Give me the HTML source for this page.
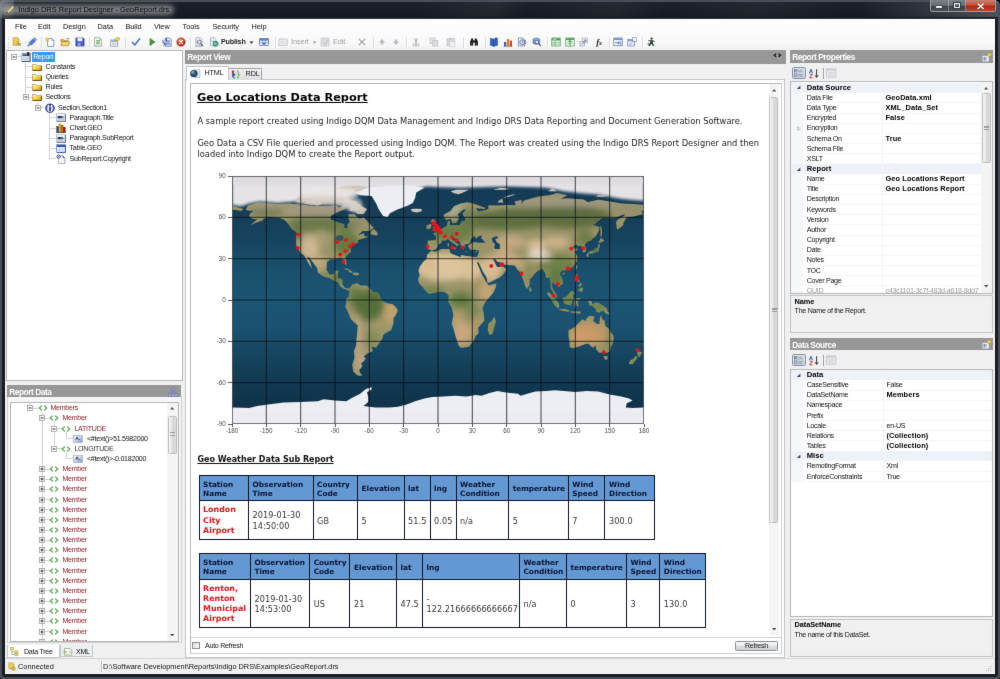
<!DOCTYPE html><html lang="en"><head><meta charset="utf-8"><title>Indigo DRS Report Designer - GeoReport.drs</title><style>
*{box-sizing:border-box;margin:0;padding:0}
html,body{width:1000px;height:679px;overflow:hidden;background:#050607}
body{position:relative;font-family:"Liberation Sans",sans-serif;font-size:7.1px;color:#000;-webkit-font-smoothing:antialiased}
.a{position:absolute}
.t{font-family:"Liberation Sans",sans-serif;font-size:7.1px;letter-spacing:-0.27px;line-height:10px;white-space:nowrap;color:#111}
.b{font-weight:700}
.m{font-family:"Liberation Sans",sans-serif;font-size:7.3px;line-height:10px;white-space:nowrap;color:#111}
.hd{background:#979797;color:#fff;font-weight:700;font-size:8.3px;line-height:15.4px;white-space:nowrap;padding-left:2px;letter-spacing:-0.43px;overflow:hidden}
.pane{background:#fff;border:1px solid #b4b6ba}
.row{position:absolute;left:0;height:10px;white-space:nowrap}
.red{color:#8e1e2a}
.v{font-family:"DejaVu Sans",sans-serif}
.sb{background:#f4f4f4}
.thumb{border:1px solid #bdbdbd;border-radius:1.5px;background:linear-gradient(90deg,#f4f4f4 0%,#e6e6e6 45%,#d2d2d2 55%,#dedede 100%)}
table.r{border-collapse:collapse;table-layout:fixed;position:absolute}
table.r td,table.r th{border:1px solid #0d1526;padding:1.4px 0 0 3.6px;text-align:left;vertical-align:middle;font-family:"DejaVu Sans",sans-serif;overflow:hidden}
table.r th{background:#6498d2;color:#071334;font-weight:700;font-size:7.35px;line-height:9px}
table.r td{background:#fff;color:#333;font-size:8.15px;line-height:10.2px;letter-spacing:.06px}
table.r td.n{color:#e0141c;font-weight:700;font-size:7.9px;letter-spacing:0}
.cat{background:#eef2f9}
</style></head><body><svg width="0" height="0" style="position:absolute"><filter id="soft" x="0" y="0" width="100%" height="100%" color-interpolation-filters="sRGB"><feConvolveMatrix order="3" kernelMatrix="0.0052 0.0619 0.0052 0.0619 0.7316 0.0619 0.0052 0.0619 0.0052" divisor="1" edgeMode="duplicate" preserveAlpha="true"/></filter></svg><div id="app" class="a" style="left:0;top:0;width:1000px;height:679px;overflow:hidden;filter:url(#soft);will-change:transform"><div class="a" style="left:0px;top:0px;width:1000px;height:679px;background:#4a4e58;border-radius:5px 5px 2px 2px"></div>
<div class="a" style="left:2px;top:2px;width:996px;height:675px;background:#181c23;border-radius:3px"></div>
<div class="a" style="left:2px;top:2px;width:996px;height:16.6px;background:linear-gradient(180deg,#1c212a 0,#181d25 50%,#141820 100%);border-radius:3px 3px 0 0"></div>
<div class="a" style="left:2px;top:17.6px;width:996px;height:1.3px;background:#30353d"></div>
<div class="a" style="left:420px;top:2px;width:420px;height:15px;background:linear-gradient(115deg,rgba(255,255,255,0) 0,rgba(255,255,255,.05) 18%,rgba(255,255,255,0) 26%,rgba(255,255,255,.045) 47%,rgba(255,255,255,0) 58%,rgba(255,255,255,.04) 80%,rgba(255,255,255,0) 100%)"></div>
<div class="a" style="left:860px;top:2px;width:138px;height:15px;background:linear-gradient(90deg,rgba(120,125,132,0) 0,rgba(120,125,132,.28) 55%,rgba(130,135,142,.5) 100%)"></div>
<div class="a" style="left:0px;top:0px;width:14px;height:18px;background:radial-gradient(ellipse at 0 0,rgba(150,152,158,.75) 0,rgba(150,152,158,.35) 60%,rgba(150,152,158,0) 100%)"></div>
<div class="a" style="left:1px;top:4.6px;width:173px;height:10.6px;background:rgba(235,236,238,.46);border-radius:5px;filter:blur(2.6px)"></div>
<div class="a" style="left:4.8px;top:4.8px;width:10px;height:10px;"><svg width="10" height="10" viewBox="0 0 10 10" style="display:block;"><path d="M1.2 8.8L2 6.6L7 1.2Q8 .6 8.8 1.6Q9.2 2.4 8.6 3L3.4 8z" fill="#e9d98a" stroke="#8a7a3a" stroke-width=".5"/><path d="M1.2 8.8L2 6.6L3.4 8z" fill="#5a4a2a"/><path d="M7 1.2L8.6 3" stroke="#b9a95a" stroke-width=".6"/></svg></div>
<div class="a m" style="left:18.4px;top:4.90px;font-size:7.5px;color:#0a0a0a">Indigo DRS Report Designer - GeoReport.drs</div>
<div class="a" style="left:929.6px;top:0px;width:66.4px;height:12px;border:1px solid rgba(225,230,236,.5);border-top:none;border-radius:0 0 2.8px 2.8px;overflow:hidden;background:#50555c"><div class="a" style="left:0px;top:0px;width:18.2px;height:12px;background:linear-gradient(180deg,#7d838b 0,#666c74 45%,#3e434a 52%,#4e535a 100%);border-right:1px solid rgba(215,220,226,.4)"><div class="a" style="left:5.6px;top:6.4px;width:6.2px;height:2px;background:#f4f4f4;box-shadow:0 0 .8px .4px #30343a;border-radius:.4px"></div></div><div class="a" style="left:18.2px;top:0px;width:17px;height:12px;background:linear-gradient(180deg,#7d838b 0,#666c74 45%,#3e434a 52%,#4e535a 100%);border-right:1px solid rgba(215,220,226,.4)"><div class="a" style="left:5px;top:3.2px;width:6.6px;height:5.2px;border:1.2px solid #f4f4f4;border-top-width:1.5px;box-shadow:0 0 .8px .4px #30343a;border-radius:.4px"></div></div><div class="a" style="left:35.2px;top:0px;width:31px;height:12px;background:linear-gradient(180deg,#c9816f 0,#bf5640 40%,#ae2a14 52%,#bd3d22 85%,#d0643c 100%)"><svg class="a" style="left:11.2px;top:2.6px" width="7.4" height="6.6" viewBox="0 0 7.4 6.6"><path d="M1.2 1L6.2 5.6M6.2 1L1.2 5.6" stroke="#5a2018" stroke-width="2.3" stroke-linecap="square" opacity=".7"/><path d="M1.2 1L6.2 5.6M6.2 1L1.2 5.6" stroke="#fff" stroke-width="1.45" stroke-linecap="square"/></svg></div></div>
<div class="a" style="left:4.6px;top:18.8px;width:990.6px;height:654.8px;background:#fbfbfb"></div>
<div class="a" style="left:5.4px;top:19.1px;width:989.4px;height:653.9px;background:#f0f0f0"></div>
<div class="a" style="left:5px;top:19.1px;width:990px;height:14.9px;background:linear-gradient(180deg,#fdfdfd 0,#fbfbfb 100%)"></div>
<div class="a m" style="left:15px;top:21.90px;">File</div>
<div class="a m" style="left:38px;top:21.90px;">Edit</div>
<div class="a m" style="left:63px;top:21.90px;">Design</div>
<div class="a m" style="left:97.6px;top:21.90px;">Data</div>
<div class="a m" style="left:125.4px;top:21.90px;">Build</div>
<div class="a m" style="left:154px;top:21.90px;">View</div>
<div class="a m" style="left:182.5px;top:21.90px;">Tools</div>
<div class="a m" style="left:212.5px;top:21.90px;">Security</div>
<div class="a m" style="left:251.5px;top:21.90px;">Help</div>
<div class="a" style="left:5px;top:34px;width:990px;height:16.5px;background:linear-gradient(180deg,#fbfbfb 0,#f8f8f8 55%,#f0f0f1 100%)"></div>
<div class="a" style="left:8px;top:37px;width:1.4px;height:10.5px;background:repeating-linear-gradient(180deg,#c3c6cb 0,#c3c6cb 1px,transparent 1px,transparent 2.4px)"></div><div class="a" style="left:12.0px;top:37.4px;width:10px;height:10px"><svg width="10" height="10" viewBox="0 0 10 10" style="display:block;"><path d="M1.2 .8H5.6L7 2.2V8.2H1.2z" fill="#f5cf4e" stroke="#a07a18" stroke-width=".55"/><path d="M5.2 5.6L8.6 9M7.6 7.2L8.8 6.8" stroke="#6a5a3a" stroke-width=".9"/><circle cx="5.2" cy="5.6" r="1.1" fill="#f2e08a" stroke="#7a6420" stroke-width=".4"/></svg></div><div class="a" style="left:26.8px;top:37.4px;width:10px;height:10px"><svg width="10" height="10" viewBox="0 0 10 10" style="display:block;"><path d="M.8 9.2L3.4 6.6" stroke="#7f92c4" stroke-width="2"/><path d="M2 5.8L5.8 2L8.2 4.4L4.4 8.2z" fill="#4f79cf" stroke="#2f4f9f" stroke-width=".4"/><path d="M5.8 2L7.6 .4L9.8 2.6L8.2 4.4z" fill="#7f9fe4" stroke="#3a5aaa" stroke-width=".4"/></svg></div><div class="a" style="left:41.0px;top:36.5px;width:1px;height:11.5px;background:#d9dbdf"></div><div class="a" style="left:42.0px;top:36.5px;width:1px;height:11.5px;background:#fff"></div><div class="a" style="left:45.0px;top:37.4px;width:10px;height:10px"><svg width="10" height="10" viewBox="0 0 10 10" style="display:block;"><path d="M2.6 1.6H7L8.8 3.4V9.4H2.6z" fill="#fbfcff" stroke="#4a5a8a" stroke-width=".6"/><path d="M7 1.6V3.4H8.8" fill="#dfe6f5" stroke="#4a5a8a" stroke-width=".5"/><path d="M2.2 .2L2.9 1.5L4.3 1.7L3.3 2.7L3.5 4.1L2.2 3.4L.9 4.1L1.1 2.7L.1 1.7L1.5 1.5z" fill="#f6d53a" stroke="#b08a10" stroke-width=".3"/></svg></div><div class="a" style="left:60.0px;top:37.4px;width:10px;height:10px"><svg width="10" height="10" viewBox="0 0 10 10" style="display:block;"><path d="M.8 2.6H3.6L4.4 3.4H8V4.6H.8z" fill="#e9b838" stroke="#8a6410" stroke-width=".5"/><path d="M.8 8.8L2 4.6H9.6L8.2 8.8z" fill="#f7d768" stroke="#8a6410" stroke-width=".55"/><path d="M6 1.6Q7.6 .6 8.8 2.2L8 2.6M8.8 2.2L9.4 1.2" fill="none" stroke="#5a6a3a" stroke-width=".5"/></svg></div><div class="a" style="left:74.6px;top:37.4px;width:10px;height:10px"><svg width="10" height="10" viewBox="0 0 10 10" style="display:block;"><path d="M.9 .9H8.2L9.1 1.8V9.1H.9z" fill="#3f55c8" stroke="#1f2f86" stroke-width=".6"/><rect x="2.4" y=".9" width="5" height="3.4" fill="#e9eefc"/><rect x="2.6" y="5.8" width="4.8" height="3.3" fill="#8f9fe0"/><rect x="5.6" y="6.3" width="1.2" height="2.3" fill="#26338a"/></svg></div><div class="a" style="left:88.5px;top:36.5px;width:1px;height:11.5px;background:#d9dbdf"></div><div class="a" style="left:89.5px;top:36.5px;width:1px;height:11.5px;background:#fff"></div><div class="a" style="left:92.6px;top:37.4px;width:10px;height:10px"><svg width="10" height="10" viewBox="0 0 10 10" style="display:block;"><path d="M1.6 .8H6.6L8.4 2.6V9.2H1.6z" fill="#f9fbf6" stroke="#6a7a7a" stroke-width=".6"/><path d="M3 3.6H7M3 5.2H7M3 6.8H7" stroke="#58a04a" stroke-width=".9"/><path d="M6.6 .8V2.6H8.4" fill="#dfe8df" stroke="#6a7a7a" stroke-width=".45"/></svg></div><div class="a" style="left:109.6px;top:37.4px;width:10px;height:10px"><svg width="10" height="10" viewBox="0 0 10 10" style="display:block;"><rect x=".8" y="3" width="7" height="6.2" fill="#eef1f7" stroke="#69758e" stroke-width=".55"/><rect x="1.1" y="3.3" width="6.4" height="1.4" fill="#8ea2c9"/><path d="M2 6H6.6M2 7.4H6.6" stroke="#9aa4b8" stroke-width=".5"/><path d="M4.4 2.4L6.6 .7H9.3V2.7L7.4 4z" fill="#f2d84c" stroke="#8a7a1a" stroke-width=".45"/></svg></div><div class="a" style="left:125.1px;top:36.5px;width:1px;height:11.5px;background:#d9dbdf"></div><div class="a" style="left:126.1px;top:36.5px;width:1px;height:11.5px;background:#fff"></div><div class="a" style="left:131.0px;top:37.4px;width:10px;height:10px"><svg width="10" height="10" viewBox="0 0 10 10" style="display:block;"><path d="M1.4 5.4L3.8 8L8.6 1.8" fill="none" stroke="#3f6fc8" stroke-width="1.5" stroke-linecap="round" stroke-linejoin="round"/></svg></div><div class="a" style="left:147.0px;top:37.4px;width:10px;height:10px"><svg width="10" height="10" viewBox="0 0 10 10" style="display:block;"><path d="M3 1.4L8 5L3 8.6z" fill="#3f9a3a" stroke="#1f6a1f" stroke-width=".5"/></svg></div><div class="a" style="left:161.6px;top:37.4px;width:10px;height:10px"><svg width="10" height="10" viewBox="0 0 10 10" style="display:block;"><path d="M3 1H7.4L9.2 2.8V9.2H3z" fill="#eef3ff" stroke="#30468e" stroke-width=".6"/><path d="M.8 3.2Q.6 6.6 3.4 7.4M3.4 7.4L2.2 5.6M3.4 7.4L1.6 8.2" fill="none" stroke="#2f55c0" stroke-width="1"/><rect x="4" y="3" width="4.2" height="5.2" fill="#7b97e0" opacity=".8"/><path d="M4.4 1.4V4.2" stroke="#30468e" stroke-width="1.2"/></svg></div><div class="a" style="left:176.0px;top:37.4px;width:10px;height:10px"><svg width="10" height="10" viewBox="0 0 10 10" style="display:block;"><defs><radialGradient id="rs12" cx=".4" cy=".3" r=".8"><stop offset="0" stop-color="#f69a7a"/><stop offset=".5" stop-color="#dc3a20"/><stop offset="1" stop-color="#a81808"/></radialGradient></defs><circle cx="5" cy="5" r="4.3" fill="url(#rs12)" stroke="#8a1a0c" stroke-width=".4"/><path d="M3.5 3.5L6.5 6.5M6.5 3.5L3.5 6.5" stroke="#fff" stroke-width="1.3" stroke-linecap="round"/></svg></div><div class="a" style="left:190.0px;top:36.5px;width:1px;height:11.5px;background:#d9dbdf"></div><div class="a" style="left:191.0px;top:36.5px;width:1px;height:11.5px;background:#fff"></div><div class="a" style="left:193.8px;top:37.4px;width:10px;height:10px"><svg width="10" height="10" viewBox="0 0 10 10" style="display:block;"><path d="M2 .8H6.4L8 2.4V8.8H2z" fill="#fbfcfd" stroke="#6a7384" stroke-width=".55"/><circle cx="5.2" cy="5" r="2" fill="#dfe9f6" stroke="#39455e" stroke-width=".7"/><path d="M6.6 6.5L8.8 9" stroke="#39455e" stroke-width="1.1"/><path d="M.8 9.4H9.4" stroke="#8a92a0" stroke-width=".5"/></svg></div><div class="a" style="left:208.8px;top:37.4px;width:10px;height:10px"><svg width="10" height="10" viewBox="0 0 10 10" style="display:block;"><path d="M1.4 .8H5.4L7 2.4V8.6H1.4z" fill="#f8fafd" stroke="#6a7a92" stroke-width=".55"/><path d="M2.4 3H5M2.4 4.4H5" stroke="#7fa0d0" stroke-width=".6"/><circle cx="6.6" cy="6.8" r="2.7" fill="#4fa488" stroke="#1f6a5a" stroke-width=".45"/><path d="M5 6.2Q6.4 5 7.6 6.4Q8 7.6 6.6 8" fill="#8fd0b0" opacity=".9"/></svg></div><div class="a m b" style="left:221px;top:37.4px;font-size:7.1px;letter-spacing:-0.15px;color:#222">Publish</div><div class="a" style="left:248.7px;top:40.8px;width:5px;height:3.2px"><svg width="5" height="3.2" viewBox="0 0 5 3.2" style="display:block;"><path d="M.4 .4H4.6L2.5 2.8z" fill="#222"/></svg></div><div class="a" style="left:259.0px;top:37.4px;width:10px;height:10px"><svg width="10" height="10" viewBox="0 0 10 10" style="display:block;"><rect x=".7" y="1.6" width="8.6" height="7" fill="#eaf0fb" stroke="#3a55a0" stroke-width=".6"/><rect x="1" y="1.9" width="8" height="1.8" fill="#5a7fd0"/><path d="M1 5.6H9M3.6 3.7V8.6M6.4 3.7V8.6" stroke="#6a88cc" stroke-width=".55"/><rect x="3.8" y="5.8" width="2.4" height="1.6" fill="#3a55a0"/></svg></div><div class="a" style="left:274.5px;top:36.5px;width:1px;height:11.5px;background:#d9dbdf"></div><div class="a" style="left:275.5px;top:36.5px;width:1px;height:11.5px;background:#fff"></div><div class="a" style="left:278.0px;top:37.4px;width:10px;height:10px"><svg width="10" height="10" viewBox="0 0 10 10" style="display:block;"><rect x=".8" y="2" width="8.4" height="6.8" fill="#ececee" stroke="#b4b7bc" stroke-width=".6"/><rect x="1.6" y="1.2" width="3.4" height="1.6" fill="#d5d7db"/><path d="M1.8 4.4H8M1.8 6H8" stroke="#cfd1d5" stroke-width=".6"/></svg></div><div class="a m" style="left:291px;top:37.4px;font-size:7.3px;letter-spacing:-0.1px;color:#9b9ea3">Insert</div><div class="a" style="left:311.7px;top:40.8px;width:5px;height:3.2px"><svg width="5" height="3.2" viewBox="0 0 5 3.2" style="display:block;"><path d="M.4 .4H4.6L2.5 2.8z" fill="#9b9ea3"/></svg></div><div class="a" style="left:320.0px;top:37.4px;width:10px;height:10px"><svg width="10" height="10" viewBox="0 0 10 10" style="display:block;"><rect x="1" y="1" width="8" height="8" fill="#e4e5e8" stroke="#b9bcc1" stroke-width=".6"/><path d="M1 3.6H9M1 6.2H9M3.7 1V9M6.4 1V9" stroke="#c8cace" stroke-width=".5"/><path d="M4 8L8.6 2.6" stroke="#c2c4c9" stroke-width="1.2"/></svg></div><div class="a m" style="left:333px;top:37.4px;font-size:7.3px;letter-spacing:-0.1px;color:#9b9ea3">Edit</div><div class="a" style="left:356.6px;top:37.4px;width:10px;height:10px"><svg width="10" height="10" viewBox="0 0 10 10" style="display:block;"><path d="M1.8 1.8L8.2 8.2M8.2 1.8L1.8 8.2" stroke="#9a9da3" stroke-width="1.1"/></svg></div><div class="a" style="left:372.5px;top:36.5px;width:1px;height:11.5px;background:#d9dbdf"></div><div class="a" style="left:373.5px;top:36.5px;width:1px;height:11.5px;background:#fff"></div><div class="a" style="left:377.0px;top:37.4px;width:10px;height:10px"><svg width="10" height="10" viewBox="0 0 10 10" style="display:block;"><path d="M5 2L8.2 5.4H6.2V7.6H3.8V5.4H1.8z" fill="#b7babf"/></svg></div><div class="a" style="left:391.0px;top:37.4px;width:10px;height:10px"><svg width="10" height="10" viewBox="0 0 10 10" style="display:block;"><path d="M5 8L8.2 4.6H6.2V2.4H3.8V4.6H1.8z" fill="#b7babf"/></svg></div><div class="a" style="left:405.9px;top:36.5px;width:1px;height:11.5px;background:#d9dbdf"></div><div class="a" style="left:406.9px;top:36.5px;width:1px;height:11.5px;background:#fff"></div><div class="a" style="left:411.4px;top:37.4px;width:10px;height:10px"><svg width="10" height="10" viewBox="0 0 10 10" style="display:block;"><path d="M3.4 1L6 6.4M6.6 1L4 6.4" stroke="#a6a9ae" stroke-width=".9"/><circle cx="3.4" cy="7.8" r="1.3" fill="none" stroke="#a6a9ae" stroke-width=".8"/><circle cx="6.6" cy="7.8" r="1.3" fill="none" stroke="#a6a9ae" stroke-width=".8"/></svg></div><div class="a" style="left:429.0px;top:37.4px;width:10px;height:10px"><svg width="10" height="10" viewBox="0 0 10 10" style="display:block;"><rect x="1" y="1" width="5" height="5.6" fill="#e6e7ea" stroke="#b4b7bc" stroke-width=".6"/><rect x="3.8" y="3.4" width="5" height="5.6" fill="#dcdee2" stroke="#b4b7bc" stroke-width=".6"/></svg></div><div class="a" style="left:446.4px;top:37.4px;width:10px;height:10px"><svg width="10" height="10" viewBox="0 0 10 10" style="display:block;"><rect x="1" y="1.8" width="7.4" height="7" fill="#d9dade" stroke="#b4b7bc" stroke-width=".6"/><rect x="3" y=".8" width="3.4" height="1.8" fill="#c4c6cb"/><rect x="3.6" y="4.2" width="5.4" height="5" fill="#eeeff1" stroke="#b9bcc1" stroke-width=".5"/></svg></div><div class="a" style="left:462.5px;top:36.5px;width:1px;height:11.5px;background:#d9dbdf"></div><div class="a" style="left:463.5px;top:36.5px;width:1px;height:11.5px;background:#fff"></div><div class="a" style="left:469.0px;top:37.4px;width:10px;height:10px"><svg width="10" height="10" viewBox="0 0 10 10" style="display:block;"><path d="M1 8.4V5L2.4 1.6H4.2V8.4zM9 8.4V5L7.6 1.6H5.8V8.4z" fill="#1d1d22"/><rect x="4" y="3.4" width="2" height="2.2" fill="#1d1d22"/><path d="M1.8 6.6H3.4M6.6 6.6H8.2" stroke="#8a8f9c" stroke-width=".6"/></svg></div><div class="a" style="left:484.5px;top:36.5px;width:1px;height:11.5px;background:#d9dbdf"></div><div class="a" style="left:485.5px;top:36.5px;width:1px;height:11.5px;background:#fff"></div><div class="a" style="left:489.0px;top:37.4px;width:10px;height:10px"><svg width="10" height="10" viewBox="0 0 10 10" style="display:block;"><path d="M1.4 1.2L5 2.2V9.4L1.4 8.2z" fill="#2f62c0" stroke="#173a80" stroke-width=".5"/><path d="M8.6 1.2L5 2.2V9.4L8.6 8.2z" fill="#5b8de0" stroke="#173a80" stroke-width=".5"/><rect x="5.6" y=".6" width="2.2" height="8" fill="#2450a8" opacity=".85"/></svg></div><div class="a" style="left:503.0px;top:37.4px;width:10px;height:10px"><svg width="10" height="10" viewBox="0 0 10 10" style="display:block;"><rect x="1" y="5" width="2.2" height="4.2" fill="#2f62c0"/><rect x="3.8" y="2" width="2.4" height="7.2" fill="#e07b1a"/><rect x="6.8" y="3.6" width="2.2" height="5.6" fill="#d9401c"/><path d="M.6 9.4H9.4" stroke="#444" stroke-width=".5"/></svg></div><div class="a" style="left:517.4px;top:37.4px;width:10px;height:10px"><svg width="10" height="10" viewBox="0 0 10 10" style="display:block;"><path d="M1.4 1H6L7.6 2.6V9H1.4z" fill="#f7f9fc" stroke="#3f5488" stroke-width=".6"/><circle cx="5.2" cy="5.2" r="2.5" fill="#dfe8f8" stroke="#2f4a8a" stroke-width=".7"/><path d="M5.2 3.8V5.3H6.4" fill="none" stroke="#2f4a8a" stroke-width=".6"/><path d="M8.2 3Q9.6 5 8.2 7.4" fill="none" stroke="#3f5488" stroke-width=".6"/></svg></div><div class="a" style="left:532.0px;top:37.4px;width:10px;height:10px"><svg width="10" height="10" viewBox="0 0 10 10" style="display:block;"><ellipse cx="4.4" cy="2.6" rx="3.4" ry="1.6" fill="#8fb0e0" stroke="#3f5f9a" stroke-width=".5"/><path d="M1 2.6V6.4Q4.4 8.6 7.8 6.4V2.6" fill="#6f96d4" stroke="#3f5f9a" stroke-width=".5"/><circle cx="5" cy="5" r="1.7" fill="#e8f0fb" stroke="#44506a" stroke-width=".6"/><path d="M6.3 6.4L9 9.2" stroke="#44506a" stroke-width="1.1"/></svg></div><div class="a" style="left:546.9px;top:36.5px;width:1px;height:11.5px;background:#d9dbdf"></div><div class="a" style="left:547.9px;top:36.5px;width:1px;height:11.5px;background:#fff"></div><div class="a" style="left:550.6px;top:37.4px;width:10px;height:10px"><svg width="10" height="10" viewBox="0 0 10 10" style="display:block;"><rect x=".8" y="1" width="8.4" height="8" fill="#f3faf2" stroke="#2f7a3a" stroke-width=".6"/><rect x="1.1" y="1.3" width="7.8" height="2.2" fill="#3f9a4a"/><path d="M1 5.4H9M1 7.2H9M4 3.5V9" stroke="#5aaa5a" stroke-width=".6"/><rect x="2" y="1.8" width="3.6" height=".9" fill="#d6f0d6"/></svg></div><div class="a" style="left:565.0px;top:37.4px;width:10px;height:10px"><svg width="10" height="10" viewBox="0 0 10 10" style="display:block;"><rect x=".8" y="1" width="8.4" height="8" fill="#f3faf2" stroke="#2f7a3a" stroke-width=".6"/><rect x="1.1" y="1.3" width="7.8" height="1.6" fill="#3f9a4a"/><path d="M5 3.4V8.4M3 5.4L5 3.4L7 5.4" fill="none" stroke="#2f8a3a" stroke-width="1"/><path d="M2.2 6.4H7.8" stroke="#7ac07a" stroke-width=".6"/></svg></div><div class="a" style="left:579.0px;top:37.4px;width:10px;height:10px"><svg width="10" height="10" viewBox="0 0 10 10" style="display:block;"><rect x="3.6" y="1" width="5" height="5" fill="#eef1f6" stroke="#8a93a6" stroke-width=".55"/><rect x="1" y="4.4" width="4.6" height="4.6" fill="#dfe4ee" stroke="#7a8498" stroke-width=".55"/><path d="M3 7L7 3M7 3H5.2M7 3V4.8" stroke="#4a5670" stroke-width=".7" fill="none"/></svg></div><div class="a" style="left:596.3px;top:37px;font-family:'Liberation Serif',serif;font-style:italic;font-weight:700;font-size:8.6px;line-height:10px;color:#222;letter-spacing:-0.4px">f<span style="font-size:6.6px">x</span></div><div class="a" style="left:608.9px;top:36.5px;width:1px;height:11.5px;background:#d9dbdf"></div><div class="a" style="left:609.9px;top:36.5px;width:1px;height:11.5px;background:#fff"></div><div class="a" style="left:613.0px;top:37.4px;width:10px;height:10px"><svg width="10" height="10" viewBox="0 0 10 10" style="display:block;"><rect x=".8" y="1" width="8.4" height="7.8" fill="#eef3fb" stroke="#3f5f9a" stroke-width=".6"/><rect x="1.1" y="1.3" width="7.8" height="1.7" fill="#6a8fd6"/><path d="M2.2 5.8H6.4M6.4 5.8L5 4.6M6.4 5.8L5 7" fill="none" stroke="#2f4a8a" stroke-width=".7"/><rect x="6.6" y="3.8" width="1.8" height="4.2" fill="#9ab4e4"/></svg></div><div class="a" style="left:627.4px;top:37.4px;width:10px;height:10px"><svg width="10" height="10" viewBox="0 0 10 10" style="display:block;"><rect x=".8" y="2.4" width="6.6" height="6.6" fill="#e8eefa" stroke="#4a629a" stroke-width=".55"/><rect x="1.1" y="2.7" width="6" height="1.5" fill="#7a9ad8"/><rect x="5.6" y=".8" width="3.6" height="3.4" fill="#f7f9fd" stroke="#4a629a" stroke-width=".5"/><path d="M2 6H6M2 7.4H5" stroke="#8a9cc4" stroke-width=".5"/></svg></div><div class="a" style="left:642.1px;top:36.5px;width:1px;height:11.5px;background:#d9dbdf"></div><div class="a" style="left:643.1px;top:36.5px;width:1px;height:11.5px;background:#fff"></div><div class="a" style="left:646.0px;top:37.4px;width:10px;height:10px"><svg width="10" height="10" viewBox="0 0 10 10" style="display:block;"><circle cx="5.6" cy="1.6" r="1.1" fill="#1c2a1c"/><path d="M2.4 3.2H7.6L6.6 5.8L8.4 8.8H6.6L5.4 6.6L4 9H2.2L4.2 5.6L4.6 4.2H2.4z" fill="#1f3a2a"/><path d="M6.2 3.6L8.6 4.6" stroke="#2f7a4a" stroke-width=".9"/><rect x="1.6" y="6" width="2" height="1.6" fill="#3f9a5a"/></svg></div>
<div class="a pane" style="left:5.6px;top:50.2px;width:177.2px;height:331.3px;"></div>
<div class="a" style="left:16.0px;top:56.2px;width:5.0px;height:0;border-top:1px solid #d2d2d2"></div><div class="a" style="left:25.1px;top:62.0px;width:0;height:32.5px;border-left:1px solid #d2d2d2"></div><div class="a" style="left:25.6px;top:66.4px;width:6.4px;height:0;border-top:1px solid #d2d2d2"></div><div class="a" style="left:25.6px;top:76.6px;width:6.4px;height:0;border-top:1px solid #d2d2d2"></div><div class="a" style="left:25.6px;top:86.8px;width:6.4px;height:0;border-top:1px solid #d2d2d2"></div><div class="a" style="left:28.0px;top:97.0px;width:4.0px;height:0;border-top:1px solid #d2d2d2"></div><div class="a" style="left:37.1px;top:102.0px;width:0;height:2.7px;border-left:1px solid #d2d2d2"></div><div class="a" style="left:40.0px;top:107.2px;width:4.0px;height:0;border-top:1px solid #d2d2d2"></div><div class="a" style="left:49.1px;top:112.0px;width:0;height:46.6px;border-left:1px solid #d2d2d2"></div><div class="a" style="left:49.6px;top:117.3px;width:6.4px;height:0;border-top:1px solid #d2d2d2"></div><div class="a" style="left:49.6px;top:127.5px;width:6.4px;height:0;border-top:1px solid #d2d2d2"></div><div class="a" style="left:49.6px;top:137.7px;width:6.4px;height:0;border-top:1px solid #d2d2d2"></div><div class="a" style="left:49.6px;top:147.9px;width:6.4px;height:0;border-top:1px solid #d2d2d2"></div><div class="a" style="left:49.6px;top:158.1px;width:6.4px;height:0;border-top:1px solid #d2d2d2"></div><div class="a" style="left:10.6px;top:53.7px;width:6px;height:6px;"><svg width="6" height="6" viewBox="0 0 6 6" style="display:block;"><rect x=".5" y=".5" width="5" height="5" fill="#fdfdfd" stroke="#8f8f8f" stroke-width=".7"/><path d="M1.5 3H4.5" stroke="#222" stroke-width=".9"/></svg></div><div class="a" style="left:20.6px;top:51.7px;width:10px;height:10px;"><svg width="10" height="10" viewBox="0 0 10 10" style="display:block;"><rect x=".8" y="1.2" width="8.2" height="8.2" fill="#d3e3f3" stroke="#6f86a8" stroke-width=".5"/><path d="M9.1 1V9.5M.8 9.5H9.2" stroke="#1b2433" stroke-width=".7" fill="none"/><rect x="1.6" y="1.6" width="6.8" height="2.4" fill="#27384f"/><rect x="2.4" y="2.2" width="1.2" height="1" fill="#dfe9f5"/><rect x="4.4" y="2.2" width="1.2" height="1" fill="#dfe9f5"/><rect x="6.2" y=".2" width="2" height="2" fill="#111a28"/><path d="M2 6H8M2 7.6H7" stroke="#a9bfd8" stroke-width=".6"/></svg></div><div class="a" style="left:32px;top:51.8px;width:23px;height:9.8px;background:#3399ff"></div><div class="a t" style="left:33.2px;top:51.70px;color:#fff">Report</div><div class="a" style="left:32px;top:62.89px;width:10px;height:8px;"><svg width="10" height="8" viewBox="0 0 10 8" style="display:block;"><defs><linearGradient id="fg39" x1="0" y1="0" x2="1" y2="1"><stop offset="0" stop-color="#fff6b0"/><stop offset=".45" stop-color="#f9d843"/><stop offset="1" stop-color="#cf9a10"/></linearGradient></defs><path d="M.5 1.5H3.4L4.2 2.4H9.3V7.4H.5z" fill="url(#fg39)" stroke="#8a6a14" stroke-width=".5"/><path d="M.7 7.5H9.5V2.9" stroke="#4f3c08" stroke-width=".9" fill="none" opacity=".85"/><path d="M.9 2.9H8.6" stroke="#fffbe0" stroke-width=".5" opacity=".7"/></svg></div><div class="a t" style="left:45.6px;top:61.89px;">Constants</div><div class="a" style="left:32px;top:73.08px;width:10px;height:8px;"><svg width="10" height="8" viewBox="0 0 10 8" style="display:block;"><defs><linearGradient id="fg40" x1="0" y1="0" x2="1" y2="1"><stop offset="0" stop-color="#fff6b0"/><stop offset=".45" stop-color="#f9d843"/><stop offset="1" stop-color="#cf9a10"/></linearGradient></defs><path d="M.5 1.5H3.4L4.2 2.4H9.3V7.4H.5z" fill="url(#fg40)" stroke="#8a6a14" stroke-width=".5"/><path d="M.7 7.5H9.5V2.9" stroke="#4f3c08" stroke-width=".9" fill="none" opacity=".85"/><path d="M.9 2.9H8.6" stroke="#fffbe0" stroke-width=".5" opacity=".7"/></svg></div><div class="a t" style="left:45.6px;top:72.08px;">Queries</div><div class="a" style="left:32px;top:83.27000000000001px;width:10px;height:8px;"><svg width="10" height="8" viewBox="0 0 10 8" style="display:block;"><defs><linearGradient id="fg41" x1="0" y1="0" x2="1" y2="1"><stop offset="0" stop-color="#fff6b0"/><stop offset=".45" stop-color="#f9d843"/><stop offset="1" stop-color="#cf9a10"/></linearGradient></defs><path d="M.5 1.5H3.4L4.2 2.4H9.3V7.4H.5z" fill="url(#fg41)" stroke="#8a6a14" stroke-width=".5"/><path d="M.7 7.5H9.5V2.9" stroke="#4f3c08" stroke-width=".9" fill="none" opacity=".85"/><path d="M.9 2.9H8.6" stroke="#fffbe0" stroke-width=".5" opacity=".7"/></svg></div><div class="a t" style="left:45.6px;top:82.27px;">Rules</div><div class="a" style="left:32px;top:93.46000000000001px;width:10px;height:8px;"><svg width="10" height="8" viewBox="0 0 10 8" style="display:block;"><defs><linearGradient id="fg42" x1="0" y1="0" x2="1" y2="1"><stop offset="0" stop-color="#fff6b0"/><stop offset=".45" stop-color="#f9d843"/><stop offset="1" stop-color="#cf9a10"/></linearGradient></defs><path d="M.5 1.5H3.4L4.2 2.4H9.3V7.4H.5z" fill="url(#fg42)" stroke="#8a6a14" stroke-width=".5"/><path d="M.7 7.5H9.5V2.9" stroke="#4f3c08" stroke-width=".9" fill="none" opacity=".85"/><path d="M.9 2.9H8.6" stroke="#fffbe0" stroke-width=".5" opacity=".7"/></svg></div><div class="a t" style="left:45.6px;top:92.46px;">Sections</div><div class="a" style="left:22.6px;top:94.46000000000001px;width:6px;height:6px;"><svg width="6" height="6" viewBox="0 0 6 6" style="display:block;"><rect x=".5" y=".5" width="5" height="5" fill="#fdfdfd" stroke="#8f8f8f" stroke-width=".7"/><path d="M1.5 3H4.5" stroke="#222" stroke-width=".9"/></svg></div><div class="a" style="left:34.6px;top:104.65px;width:6px;height:6px;"><svg width="6" height="6" viewBox="0 0 6 6" style="display:block;"><rect x=".5" y=".5" width="5" height="5" fill="#fdfdfd" stroke="#8f8f8f" stroke-width=".7"/><path d="M1.5 3H4.5" stroke="#222" stroke-width=".9"/></svg></div><div class="a" style="left:44.6px;top:102.65px;width:10px;height:10px;"><svg width="10" height="10" viewBox="0 0 10 10" style="display:block;"><circle cx="5" cy="5.2" r="4.1" fill="#e9eefc" stroke="#18247c" stroke-width="1"/><path d="M2 2.4Q.8 5.2 2 8M8 2.4Q9.2 5.2 8 8" fill="none" stroke="#3a52c4" stroke-width="1.5"/><path d="M5 3.6V8" stroke="#111a60" stroke-width="1.5"/><circle cx="5" cy="2.1" r=".9" fill="#111a60"/></svg></div><div class="a t" style="left:58px;top:102.65px;">Section.Section1</div><div class="a" style="left:55.6px;top:113.34px;width:10px;height:9px;"><svg width="10" height="9" viewBox="0 0 10 9" style="display:block;"><rect x=".7" y=".8" width="8.6" height="7.4" fill="#f1f4f9" stroke="#8593ad" stroke-width=".55"/><path d="M9.4 1V8.3H.9" stroke="#39455e" stroke-width=".7" fill="none"/><rect x="1.6" y="3" width="5.2" height="2.3" fill="#25355a"/><rect x="5.4" y="3.6" width="3" height="1.7" fill="#7f90b4"/><path d="M1.6 6.6H8.2" stroke="#a9b4c9" stroke-width=".7"/></svg></div><div class="a t" style="left:69.6px;top:112.84px;">Paragraph.Title</div><div class="a" style="left:55.6px;top:123.03px;width:10px;height:10px;"><svg width="10" height="10" viewBox="0 0 10 10" style="display:block;"><rect x=".7" y="3.6" width="2" height="5.8" fill="#2747a8" stroke="#101c50" stroke-width=".4"/><rect x="2.9" y="1" width="2" height="8.4" fill="#f3c420" stroke="#6a4a08" stroke-width=".4"/><rect x="5.1" y="2.2" width="2" height="7.2" fill="#e2701c" stroke="#6a2a08" stroke-width=".4"/><rect x="7.3" y="4.2" width="2" height="5.2" fill="#a41c10" stroke="#4a0c06" stroke-width=".4"/><path d="M.3 9.6H9.8" stroke="#2a1a10" stroke-width=".6"/></svg></div><div class="a t" style="left:69.6px;top:123.03px;">Chart.GEO</div><div class="a" style="left:55.6px;top:133.72px;width:10px;height:9px;"><svg width="10" height="9" viewBox="0 0 10 9" style="display:block;"><rect x=".7" y=".8" width="8.6" height="7.4" fill="#f1f4f9" stroke="#8593ad" stroke-width=".55"/><path d="M9.4 1V8.3H.9" stroke="#39455e" stroke-width=".7" fill="none"/><rect x="1.6" y="3" width="5.2" height="2.3" fill="#25355a"/><rect x="5.4" y="3.6" width="3" height="1.7" fill="#7f90b4"/><path d="M1.6 6.6H8.2" stroke="#a9b4c9" stroke-width=".7"/></svg></div><div class="a t" style="left:69.6px;top:133.22px;">Paragraph.SubReport</div><div class="a" style="left:55.6px;top:143.91px;width:10px;height:9px;"><svg width="10" height="9" viewBox="0 0 10 9" style="display:block;"><rect x=".7" y=".7" width="8.6" height="7.6" fill="#eef4fd" stroke="#3f62b2" stroke-width=".6"/><rect x="1" y="1" width="8" height="2" fill="#2f58b8"/><path d="M3.6 3V8.2M6.4 3V8.2M.8 5.6H9.2" stroke="#9db6e2" stroke-width=".5"/><path d="M9.4 .9V8.4H.9" stroke="#1f3a80" stroke-width=".7" fill="none"/></svg></div><div class="a t" style="left:69.6px;top:143.41px;">Table.GEO</div><div class="a" style="left:55.6px;top:153.6px;width:10px;height:10px;"><svg width="10" height="10" viewBox="0 0 10 10" style="display:block;"><path d="M2.4 1.6H6.6L8.8 3.8V9.6H2.4z" fill="#f6f8fb" stroke="#7a86a0" stroke-width=".55"/><path d="M6.6 1.6V3.8H8.8z" fill="#2a3346"/><path d="M8.9 4V9.7H2.6" stroke="#9aa6bd" stroke-width=".6" fill="none"/><circle cx="2.6" cy="2.6" r="1.7" fill="#f2f4fa" stroke="#27337a" stroke-width=".8"/><circle cx="2.6" cy="2.6" r=".6" fill="#27337a"/></svg></div><div class="a t" style="left:69.6px;top:153.60px;">SubReport.Copyright</div>
<div class="a" style="left:7.2px;top:397.4px;width:174.8px;height:246px;border:1px solid #cfd1d4;border-top:none;background:#f6f6f6"></div>
<div class="a hd" style="left:7.2px;top:384.6px;width:174px;height:12.9px;">Report Data</div>
<div class="a" style="left:168px;top:386.5px;width:10px;height:10px;"><svg width="10" height="10" viewBox="0 0 10 10" style="display:block;"><rect x="3.4" y=".8" width="3.2" height="2.6" fill="#8fa3d8" stroke="#5c6fae" stroke-width=".5"/><path d="M5 3.4V5.4M1.8 7V5.4H8.2V7" fill="none" stroke="#6f7fb5" stroke-width=".6"/><rect x=".6" y="6.8" width="2.6" height="2.4" fill="#9db0e0" stroke="#5c6fae" stroke-width=".5"/><rect x="3.7" y="6.8" width="2.6" height="2.4" fill="#9db0e0" stroke="#5c6fae" stroke-width=".5"/><rect x="6.8" y="6.8" width="2.6" height="2.4" fill="#9db0e0" stroke="#5c6fae" stroke-width=".5"/></svg></div>
<div class="a pane" style="left:9.5px;top:402px;width:169.5px;height:239.5px;overflow:hidden"><div class="a" style="left:18.6px;top:-1.0px;width:0;height:3.2px;border-left:1px solid #d2d2d2"></div><div class="a" style="left:31.0px;top:10.2px;width:0;height:228.4px;border-left:1px solid #d2d2d2"></div><div class="a" style="left:22.0px;top:4.7px;width:5.5px;height:0;border-top:1px solid #d2d2d2"></div><div class="a" style="left:43.0px;top:18.3px;width:0;height:24.5px;border-left:1px solid #d2d2d2"></div><div class="a" style="left:55.0px;top:28.5px;width:0;height:7.1px;border-left:1px solid #d2d2d2"></div><div class="a" style="left:55.5px;top:35.1px;width:7.0px;height:0;border-top:1px solid #d2d2d2"></div><div class="a" style="left:55.0px;top:48.8px;width:0;height:7.1px;border-left:1px solid #d2d2d2"></div><div class="a" style="left:55.5px;top:55.4px;width:7.0px;height:0;border-top:1px solid #d2d2d2"></div><div class="a" style="left:16.1px;top:2.2px;width:6px;height:6px;"><svg width="6" height="6" viewBox="0 0 6 6" style="display:block;"><rect x=".5" y=".5" width="5" height="5" fill="#fdfdfd" stroke="#8f8f8f" stroke-width=".7"/><path d="M1.5 3H4.5" stroke="#222" stroke-width=".9"/></svg></div><div class="a" style="left:27.5px;top:1.2px;width:10px;height:8px;"><svg width="10" height="8" viewBox="0 0 10 8" style="display:block;"><path d="M3.5 2L1.2 4L3.5 6M6.5 2L8.8 4L6.5 6" fill="none" stroke="#62a857" stroke-width="1.3" stroke-linecap="round" stroke-linejoin="round"/></svg></div><div class="a t red" style="left:39.9px;top:0.20px;">Members</div><div class="a" style="left:34.5px;top:14.8px;width:4.5px;height:0;border-top:1px solid #d2d2d2"></div><div class="a" style="left:28.5px;top:12.35px;width:6px;height:6px;"><svg width="6" height="6" viewBox="0 0 6 6" style="display:block;"><rect x=".5" y=".5" width="5" height="5" fill="#fdfdfd" stroke="#8f8f8f" stroke-width=".7"/><path d="M1.5 3H4.5" stroke="#222" stroke-width=".9"/></svg></div><div class="a" style="left:38.9px;top:11.35px;width:10px;height:8px;"><svg width="10" height="8" viewBox="0 0 10 8" style="display:block;"><path d="M3.5 2L1.2 4L3.5 6M6.5 2L8.8 4L6.5 6" fill="none" stroke="#62a857" stroke-width="1.3" stroke-linecap="round" stroke-linejoin="round"/></svg></div><div class="a t red" style="left:51.9px;top:10.35px;">Member</div><div class="a" style="left:46.5px;top:25.0px;width:4.5px;height:0;border-top:1px solid #d2d2d2"></div><div class="a" style="left:40.5px;top:22.5px;width:6px;height:6px;"><svg width="6" height="6" viewBox="0 0 6 6" style="display:block;"><rect x=".5" y=".5" width="5" height="5" fill="#fdfdfd" stroke="#8f8f8f" stroke-width=".7"/><path d="M1.5 3H4.5" stroke="#222" stroke-width=".9"/></svg></div><div class="a" style="left:50.5px;top:21.5px;width:10px;height:8px;"><svg width="10" height="8" viewBox="0 0 10 8" style="display:block;"><path d="M3.5 2L1.2 4L3.5 6M6.5 2L8.8 4L6.5 6" fill="none" stroke="#62a857" stroke-width="1.3" stroke-linecap="round" stroke-linejoin="round"/></svg></div><div class="a t red" style="left:63.9px;top:20.50px;">LATITUDE</div><div class="a" style="left:62.5px;top:31.65px;width:10px;height:8px;"><svg width="10" height="8" viewBox="0 0 10 8" style="display:block;"><defs><linearGradient id="tn58" x1="0" y1="0" x2="1" y2="1"><stop offset="0" stop-color="#fbfcfe"/><stop offset=".5" stop-color="#c9d2e8"/><stop offset="1" stop-color="#7f90c2"/></linearGradient></defs><rect x=".6" y=".6" width="8.8" height="6.8" fill="url(#tn58)" stroke="#8f9abb" stroke-width=".55"/><path d="M2.8 4.6L4 1.8L5.2 4.6M3.2 3.7H4.8" stroke="#1c2440" stroke-width=".7" fill="none"/><path d="M5.8 4.6H7.2" stroke="#1c2440" stroke-width=".6"/></svg></div><div class="a t" style="left:76.5px;top:30.65px;">&lt;#text()&gt;51.5982000</div><div class="a" style="left:46.5px;top:45.3px;width:4.5px;height:0;border-top:1px solid #d2d2d2"></div><div class="a" style="left:40.5px;top:42.8px;width:6px;height:6px;"><svg width="6" height="6" viewBox="0 0 6 6" style="display:block;"><rect x=".5" y=".5" width="5" height="5" fill="#fdfdfd" stroke="#8f8f8f" stroke-width=".7"/><path d="M1.5 3H4.5" stroke="#222" stroke-width=".9"/></svg></div><div class="a" style="left:50.5px;top:41.8px;width:10px;height:8px;"><svg width="10" height="8" viewBox="0 0 10 8" style="display:block;"><path d="M3.5 2L1.2 4L3.5 6M6.5 2L8.8 4L6.5 6" fill="none" stroke="#62a857" stroke-width="1.3" stroke-linecap="round" stroke-linejoin="round"/></svg></div><div class="a t" style="left:63.9px;top:40.80px;color:#333">LONGITUDE</div><div class="a" style="left:62.5px;top:51.95px;width:10px;height:8px;"><svg width="10" height="8" viewBox="0 0 10 8" style="display:block;"><defs><linearGradient id="tn61" x1="0" y1="0" x2="1" y2="1"><stop offset="0" stop-color="#fbfcfe"/><stop offset=".5" stop-color="#c9d2e8"/><stop offset="1" stop-color="#7f90c2"/></linearGradient></defs><rect x=".6" y=".6" width="8.8" height="6.8" fill="url(#tn61)" stroke="#8f9abb" stroke-width=".55"/><path d="M2.8 4.6L4 1.8L5.2 4.6M3.2 3.7H4.8" stroke="#1c2440" stroke-width=".7" fill="none"/><path d="M5.8 4.6H7.2" stroke="#1c2440" stroke-width=".6"/></svg></div><div class="a t" style="left:76.5px;top:50.95px;">&lt;#text()&gt;-0.0182000</div><div class="a" style="left:34.5px;top:65.6px;width:4.5px;height:0;border-top:1px solid #d2d2d2"></div><div class="a" style="left:28.5px;top:63.1px;width:6px;height:6px;"><svg width="6" height="6" viewBox="0 0 6 6" style="display:block;"><rect x=".5" y=".5" width="5" height="5" fill="#fdfdfd" stroke="#8f8f8f" stroke-width=".7"/><path d="M1.5 3H4.5" stroke="#222" stroke-width=".9"/><path d="M3 1.5V4.5" stroke="#222" stroke-width=".9"/></svg></div><div class="a" style="left:38.9px;top:62.1px;width:10px;height:8px;"><svg width="10" height="8" viewBox="0 0 10 8" style="display:block;"><path d="M3.5 2L1.2 4L3.5 6M6.5 2L8.8 4L6.5 6" fill="none" stroke="#62a857" stroke-width="1.3" stroke-linecap="round" stroke-linejoin="round"/></svg></div><div class="a t red" style="left:51.9px;top:61.10px;">Member</div><div class="a" style="left:34.5px;top:75.8px;width:4.5px;height:0;border-top:1px solid #d2d2d2"></div><div class="a" style="left:28.5px;top:73.25px;width:6px;height:6px;"><svg width="6" height="6" viewBox="0 0 6 6" style="display:block;"><rect x=".5" y=".5" width="5" height="5" fill="#fdfdfd" stroke="#8f8f8f" stroke-width=".7"/><path d="M1.5 3H4.5" stroke="#222" stroke-width=".9"/><path d="M3 1.5V4.5" stroke="#222" stroke-width=".9"/></svg></div><div class="a" style="left:38.9px;top:72.25px;width:10px;height:8px;"><svg width="10" height="8" viewBox="0 0 10 8" style="display:block;"><path d="M3.5 2L1.2 4L3.5 6M6.5 2L8.8 4L6.5 6" fill="none" stroke="#62a857" stroke-width="1.3" stroke-linecap="round" stroke-linejoin="round"/></svg></div><div class="a t red" style="left:51.9px;top:71.25px;">Member</div><div class="a" style="left:34.5px;top:85.9px;width:4.5px;height:0;border-top:1px solid #d2d2d2"></div><div class="a" style="left:28.5px;top:83.4px;width:6px;height:6px;"><svg width="6" height="6" viewBox="0 0 6 6" style="display:block;"><rect x=".5" y=".5" width="5" height="5" fill="#fdfdfd" stroke="#8f8f8f" stroke-width=".7"/><path d="M1.5 3H4.5" stroke="#222" stroke-width=".9"/><path d="M3 1.5V4.5" stroke="#222" stroke-width=".9"/></svg></div><div class="a" style="left:38.9px;top:82.4px;width:10px;height:8px;"><svg width="10" height="8" viewBox="0 0 10 8" style="display:block;"><path d="M3.5 2L1.2 4L3.5 6M6.5 2L8.8 4L6.5 6" fill="none" stroke="#62a857" stroke-width="1.3" stroke-linecap="round" stroke-linejoin="round"/></svg></div><div class="a t red" style="left:51.9px;top:81.40px;">Member</div><div class="a" style="left:34.5px;top:96.1px;width:4.5px;height:0;border-top:1px solid #d2d2d2"></div><div class="a" style="left:28.5px;top:93.55px;width:6px;height:6px;"><svg width="6" height="6" viewBox="0 0 6 6" style="display:block;"><rect x=".5" y=".5" width="5" height="5" fill="#fdfdfd" stroke="#8f8f8f" stroke-width=".7"/><path d="M1.5 3H4.5" stroke="#222" stroke-width=".9"/><path d="M3 1.5V4.5" stroke="#222" stroke-width=".9"/></svg></div><div class="a" style="left:38.9px;top:92.55px;width:10px;height:8px;"><svg width="10" height="8" viewBox="0 0 10 8" style="display:block;"><path d="M3.5 2L1.2 4L3.5 6M6.5 2L8.8 4L6.5 6" fill="none" stroke="#62a857" stroke-width="1.3" stroke-linecap="round" stroke-linejoin="round"/></svg></div><div class="a t red" style="left:51.9px;top:91.55px;">Member</div><div class="a" style="left:34.5px;top:106.2px;width:4.5px;height:0;border-top:1px solid #d2d2d2"></div><div class="a" style="left:28.5px;top:103.7px;width:6px;height:6px;"><svg width="6" height="6" viewBox="0 0 6 6" style="display:block;"><rect x=".5" y=".5" width="5" height="5" fill="#fdfdfd" stroke="#8f8f8f" stroke-width=".7"/><path d="M1.5 3H4.5" stroke="#222" stroke-width=".9"/><path d="M3 1.5V4.5" stroke="#222" stroke-width=".9"/></svg></div><div class="a" style="left:38.9px;top:102.7px;width:10px;height:8px;"><svg width="10" height="8" viewBox="0 0 10 8" style="display:block;"><path d="M3.5 2L1.2 4L3.5 6M6.5 2L8.8 4L6.5 6" fill="none" stroke="#62a857" stroke-width="1.3" stroke-linecap="round" stroke-linejoin="round"/></svg></div><div class="a t red" style="left:51.9px;top:101.70px;">Member</div><div class="a" style="left:34.5px;top:116.4px;width:4.5px;height:0;border-top:1px solid #d2d2d2"></div><div class="a" style="left:28.5px;top:113.85px;width:6px;height:6px;"><svg width="6" height="6" viewBox="0 0 6 6" style="display:block;"><rect x=".5" y=".5" width="5" height="5" fill="#fdfdfd" stroke="#8f8f8f" stroke-width=".7"/><path d="M1.5 3H4.5" stroke="#222" stroke-width=".9"/><path d="M3 1.5V4.5" stroke="#222" stroke-width=".9"/></svg></div><div class="a" style="left:38.9px;top:112.85px;width:10px;height:8px;"><svg width="10" height="8" viewBox="0 0 10 8" style="display:block;"><path d="M3.5 2L1.2 4L3.5 6M6.5 2L8.8 4L6.5 6" fill="none" stroke="#62a857" stroke-width="1.3" stroke-linecap="round" stroke-linejoin="round"/></svg></div><div class="a t red" style="left:51.9px;top:111.85px;">Member</div><div class="a" style="left:34.5px;top:126.5px;width:4.5px;height:0;border-top:1px solid #d2d2d2"></div><div class="a" style="left:28.5px;top:124.0px;width:6px;height:6px;"><svg width="6" height="6" viewBox="0 0 6 6" style="display:block;"><rect x=".5" y=".5" width="5" height="5" fill="#fdfdfd" stroke="#8f8f8f" stroke-width=".7"/><path d="M1.5 3H4.5" stroke="#222" stroke-width=".9"/><path d="M3 1.5V4.5" stroke="#222" stroke-width=".9"/></svg></div><div class="a" style="left:38.9px;top:123.0px;width:10px;height:8px;"><svg width="10" height="8" viewBox="0 0 10 8" style="display:block;"><path d="M3.5 2L1.2 4L3.5 6M6.5 2L8.8 4L6.5 6" fill="none" stroke="#62a857" stroke-width="1.3" stroke-linecap="round" stroke-linejoin="round"/></svg></div><div class="a t red" style="left:51.9px;top:122.00px;">Member</div><div class="a" style="left:34.5px;top:136.6px;width:4.5px;height:0;border-top:1px solid #d2d2d2"></div><div class="a" style="left:28.5px;top:134.15px;width:6px;height:6px;"><svg width="6" height="6" viewBox="0 0 6 6" style="display:block;"><rect x=".5" y=".5" width="5" height="5" fill="#fdfdfd" stroke="#8f8f8f" stroke-width=".7"/><path d="M1.5 3H4.5" stroke="#222" stroke-width=".9"/><path d="M3 1.5V4.5" stroke="#222" stroke-width=".9"/></svg></div><div class="a" style="left:38.9px;top:133.15px;width:10px;height:8px;"><svg width="10" height="8" viewBox="0 0 10 8" style="display:block;"><path d="M3.5 2L1.2 4L3.5 6M6.5 2L8.8 4L6.5 6" fill="none" stroke="#62a857" stroke-width="1.3" stroke-linecap="round" stroke-linejoin="round"/></svg></div><div class="a t red" style="left:51.9px;top:132.15px;">Member</div><div class="a" style="left:34.5px;top:146.8px;width:4.5px;height:0;border-top:1px solid #d2d2d2"></div><div class="a" style="left:28.5px;top:144.3px;width:6px;height:6px;"><svg width="6" height="6" viewBox="0 0 6 6" style="display:block;"><rect x=".5" y=".5" width="5" height="5" fill="#fdfdfd" stroke="#8f8f8f" stroke-width=".7"/><path d="M1.5 3H4.5" stroke="#222" stroke-width=".9"/><path d="M3 1.5V4.5" stroke="#222" stroke-width=".9"/></svg></div><div class="a" style="left:38.9px;top:143.3px;width:10px;height:8px;"><svg width="10" height="8" viewBox="0 0 10 8" style="display:block;"><path d="M3.5 2L1.2 4L3.5 6M6.5 2L8.8 4L6.5 6" fill="none" stroke="#62a857" stroke-width="1.3" stroke-linecap="round" stroke-linejoin="round"/></svg></div><div class="a t red" style="left:51.9px;top:142.30px;">Member</div><div class="a" style="left:34.5px;top:157.0px;width:4.5px;height:0;border-top:1px solid #d2d2d2"></div><div class="a" style="left:28.5px;top:154.45px;width:6px;height:6px;"><svg width="6" height="6" viewBox="0 0 6 6" style="display:block;"><rect x=".5" y=".5" width="5" height="5" fill="#fdfdfd" stroke="#8f8f8f" stroke-width=".7"/><path d="M1.5 3H4.5" stroke="#222" stroke-width=".9"/><path d="M3 1.5V4.5" stroke="#222" stroke-width=".9"/></svg></div><div class="a" style="left:38.9px;top:153.45px;width:10px;height:8px;"><svg width="10" height="8" viewBox="0 0 10 8" style="display:block;"><path d="M3.5 2L1.2 4L3.5 6M6.5 2L8.8 4L6.5 6" fill="none" stroke="#62a857" stroke-width="1.3" stroke-linecap="round" stroke-linejoin="round"/></svg></div><div class="a t red" style="left:51.9px;top:152.45px;">Member</div><div class="a" style="left:34.5px;top:167.1px;width:4.5px;height:0;border-top:1px solid #d2d2d2"></div><div class="a" style="left:28.5px;top:164.6px;width:6px;height:6px;"><svg width="6" height="6" viewBox="0 0 6 6" style="display:block;"><rect x=".5" y=".5" width="5" height="5" fill="#fdfdfd" stroke="#8f8f8f" stroke-width=".7"/><path d="M1.5 3H4.5" stroke="#222" stroke-width=".9"/><path d="M3 1.5V4.5" stroke="#222" stroke-width=".9"/></svg></div><div class="a" style="left:38.9px;top:163.6px;width:10px;height:8px;"><svg width="10" height="8" viewBox="0 0 10 8" style="display:block;"><path d="M3.5 2L1.2 4L3.5 6M6.5 2L8.8 4L6.5 6" fill="none" stroke="#62a857" stroke-width="1.3" stroke-linecap="round" stroke-linejoin="round"/></svg></div><div class="a t red" style="left:51.9px;top:162.60px;">Member</div><div class="a" style="left:34.5px;top:177.2px;width:4.5px;height:0;border-top:1px solid #d2d2d2"></div><div class="a" style="left:28.5px;top:174.75px;width:6px;height:6px;"><svg width="6" height="6" viewBox="0 0 6 6" style="display:block;"><rect x=".5" y=".5" width="5" height="5" fill="#fdfdfd" stroke="#8f8f8f" stroke-width=".7"/><path d="M1.5 3H4.5" stroke="#222" stroke-width=".9"/><path d="M3 1.5V4.5" stroke="#222" stroke-width=".9"/></svg></div><div class="a" style="left:38.9px;top:173.75px;width:10px;height:8px;"><svg width="10" height="8" viewBox="0 0 10 8" style="display:block;"><path d="M3.5 2L1.2 4L3.5 6M6.5 2L8.8 4L6.5 6" fill="none" stroke="#62a857" stroke-width="1.3" stroke-linecap="round" stroke-linejoin="round"/></svg></div><div class="a t red" style="left:51.9px;top:172.75px;">Member</div><div class="a" style="left:34.5px;top:187.4px;width:4.5px;height:0;border-top:1px solid #d2d2d2"></div><div class="a" style="left:28.5px;top:184.9px;width:6px;height:6px;"><svg width="6" height="6" viewBox="0 0 6 6" style="display:block;"><rect x=".5" y=".5" width="5" height="5" fill="#fdfdfd" stroke="#8f8f8f" stroke-width=".7"/><path d="M1.5 3H4.5" stroke="#222" stroke-width=".9"/><path d="M3 1.5V4.5" stroke="#222" stroke-width=".9"/></svg></div><div class="a" style="left:38.9px;top:183.9px;width:10px;height:8px;"><svg width="10" height="8" viewBox="0 0 10 8" style="display:block;"><path d="M3.5 2L1.2 4L3.5 6M6.5 2L8.8 4L6.5 6" fill="none" stroke="#62a857" stroke-width="1.3" stroke-linecap="round" stroke-linejoin="round"/></svg></div><div class="a t red" style="left:51.9px;top:182.90px;">Member</div><div class="a" style="left:34.5px;top:197.5px;width:4.5px;height:0;border-top:1px solid #d2d2d2"></div><div class="a" style="left:28.5px;top:195.05px;width:6px;height:6px;"><svg width="6" height="6" viewBox="0 0 6 6" style="display:block;"><rect x=".5" y=".5" width="5" height="5" fill="#fdfdfd" stroke="#8f8f8f" stroke-width=".7"/><path d="M1.5 3H4.5" stroke="#222" stroke-width=".9"/><path d="M3 1.5V4.5" stroke="#222" stroke-width=".9"/></svg></div><div class="a" style="left:38.9px;top:194.05px;width:10px;height:8px;"><svg width="10" height="8" viewBox="0 0 10 8" style="display:block;"><path d="M3.5 2L1.2 4L3.5 6M6.5 2L8.8 4L6.5 6" fill="none" stroke="#62a857" stroke-width="1.3" stroke-linecap="round" stroke-linejoin="round"/></svg></div><div class="a t red" style="left:51.9px;top:193.05px;">Member</div><div class="a" style="left:34.5px;top:207.7px;width:4.5px;height:0;border-top:1px solid #d2d2d2"></div><div class="a" style="left:28.5px;top:205.2px;width:6px;height:6px;"><svg width="6" height="6" viewBox="0 0 6 6" style="display:block;"><rect x=".5" y=".5" width="5" height="5" fill="#fdfdfd" stroke="#8f8f8f" stroke-width=".7"/><path d="M1.5 3H4.5" stroke="#222" stroke-width=".9"/><path d="M3 1.5V4.5" stroke="#222" stroke-width=".9"/></svg></div><div class="a" style="left:38.9px;top:204.2px;width:10px;height:8px;"><svg width="10" height="8" viewBox="0 0 10 8" style="display:block;"><path d="M3.5 2L1.2 4L3.5 6M6.5 2L8.8 4L6.5 6" fill="none" stroke="#62a857" stroke-width="1.3" stroke-linecap="round" stroke-linejoin="round"/></svg></div><div class="a t red" style="left:51.9px;top:203.20px;">Member</div><div class="a" style="left:34.5px;top:217.9px;width:4.5px;height:0;border-top:1px solid #d2d2d2"></div><div class="a" style="left:28.5px;top:215.35px;width:6px;height:6px;"><svg width="6" height="6" viewBox="0 0 6 6" style="display:block;"><rect x=".5" y=".5" width="5" height="5" fill="#fdfdfd" stroke="#8f8f8f" stroke-width=".7"/><path d="M1.5 3H4.5" stroke="#222" stroke-width=".9"/><path d="M3 1.5V4.5" stroke="#222" stroke-width=".9"/></svg></div><div class="a" style="left:38.9px;top:214.35px;width:10px;height:8px;"><svg width="10" height="8" viewBox="0 0 10 8" style="display:block;"><path d="M3.5 2L1.2 4L3.5 6M6.5 2L8.8 4L6.5 6" fill="none" stroke="#62a857" stroke-width="1.3" stroke-linecap="round" stroke-linejoin="round"/></svg></div><div class="a t red" style="left:51.9px;top:213.35px;">Member</div><div class="a" style="left:34.5px;top:228.0px;width:4.5px;height:0;border-top:1px solid #d2d2d2"></div><div class="a" style="left:28.5px;top:225.5px;width:6px;height:6px;"><svg width="6" height="6" viewBox="0 0 6 6" style="display:block;"><rect x=".5" y=".5" width="5" height="5" fill="#fdfdfd" stroke="#8f8f8f" stroke-width=".7"/><path d="M1.5 3H4.5" stroke="#222" stroke-width=".9"/><path d="M3 1.5V4.5" stroke="#222" stroke-width=".9"/></svg></div><div class="a" style="left:38.9px;top:224.5px;width:10px;height:8px;"><svg width="10" height="8" viewBox="0 0 10 8" style="display:block;"><path d="M3.5 2L1.2 4L3.5 6M6.5 2L8.8 4L6.5 6" fill="none" stroke="#62a857" stroke-width="1.3" stroke-linecap="round" stroke-linejoin="round"/></svg></div><div class="a t red" style="left:51.9px;top:223.50px;">Member</div><div class="a" style="left:34.5px;top:238.1px;width:4.5px;height:0;border-top:1px solid #d2d2d2"></div><div class="a" style="left:28.5px;top:235.65px;width:6px;height:6px;"><svg width="6" height="6" viewBox="0 0 6 6" style="display:block;"><rect x=".5" y=".5" width="5" height="5" fill="#fdfdfd" stroke="#8f8f8f" stroke-width=".7"/><path d="M1.5 3H4.5" stroke="#222" stroke-width=".9"/><path d="M3 1.5V4.5" stroke="#222" stroke-width=".9"/></svg></div><div class="a" style="left:38.9px;top:234.65px;width:10px;height:8px;"><svg width="10" height="8" viewBox="0 0 10 8" style="display:block;"><path d="M3.5 2L1.2 4L3.5 6M6.5 2L8.8 4L6.5 6" fill="none" stroke="#62a857" stroke-width="1.3" stroke-linecap="round" stroke-linejoin="round"/></svg></div><div class="a t red" style="left:51.9px;top:233.65px;">Member</div><div class="a sb" style="left:156.5px;top:0px;width:10.5px;height:237.5px;"></div><div class="a thumb" style="left:157.1px;top:13px;width:9.4px;height:37.5px;"></div><div class="a" style="left:159.3px;top:29.19999999999999px;width:5px;height:4.4px;background:repeating-linear-gradient(180deg,#8c8c8c 0,#8c8c8c .7px,transparent .7px,transparent 1.5px);opacity:.8"></div><div class="a" style="left:159.3px;top:4px;width:5px;height:3px;"><svg width="4.2" height="2.6" viewBox="0 0 5 3" style="display:block;"><path d="M0 3L2.5 0L5 3z" fill="#505050"/></svg></div><div class="a" style="left:159.3px;top:230.5px;width:5px;height:3px;"><svg width="4.2" height="2.6" viewBox="0 0 5 3" style="display:block;"><path d="M0 0L2.5 3L5 0z" fill="#505050"/></svg></div></div>
<div class="a" style="left:7px;top:644.6px;width:52.5px;height:13.6px;background:#fff;border:1px solid #c4c8ce;border-top:none"></div>
<div class="a" style="left:59.5px;top:644.6px;width:33.5px;height:12.6px;background:#eceef1;border:1px solid #c4c8ce;border-top:none"></div>
<div class="a" style="left:10px;top:647.2px;width:9px;height:9px;"><svg width="9" height="9" viewBox="0 0 9 9" style="display:block;"><rect x=".5" y=".5" width="3" height="2.4" fill="#f3e27a" stroke="#a89a3a" stroke-width=".5"/><path d="M2 3V7.5H5M2 5H5" fill="none" stroke="#7d8a4a" stroke-width=".6"/><rect x="5" y="3.8" width="3" height="2.2" fill="#f3e27a" stroke="#a89a3a" stroke-width=".5"/><rect x="5" y="6.4" width="3" height="2.2" fill="#cfe08a" stroke="#8a9a3a" stroke-width=".5"/></svg></div>
<div class="a t" style="left:24px;top:647.20px;">Data Tree</div>
<div class="a" style="left:62.5px;top:647px;width:10px;height:9px;"><svg width="10" height="9" viewBox="0 0 10 9" style="display:block;"><path d="M1.5 1.5H7L8.8 3.2V8.2H1.5z" fill="#f6f8ee" stroke="#7d8d5a" stroke-width=".6"/><path d="M3.6 4L2.6 5.2L3.6 6.4M6.4 4L7.4 5.2L6.4 6.4" fill="none" stroke="#5a8a3a" stroke-width=".7"/><rect x=".4" y="3.4" width="2" height="3" fill="#9bbf6a" opacity=".7"/></svg></div>
<div class="a t" style="left:76px;top:646.80px;">XML</div>
<div class="a" style="left:5px;top:658px;width:990px;height:15.3px;background:#f0f0f0;border-top:1px solid #d6d6d6"></div>
<div class="a" style="left:7.5px;top:662px;width:8px;height:9px;"><svg width="8" height="9" viewBox="0 0 8 9" style="display:block;"><path d="M.8 .8H4.6L5.8 2V6.8H.8z" fill="#f2cf55" stroke="#a8862a" stroke-width=".5"/><circle cx="5.4" cy="6.6" r="1.8" fill="#f0d060" stroke="#8a6a1a" stroke-width=".5"/><path d="M5.4 5.6V7.6" stroke="#7a5a10" stroke-width=".5"/></svg></div>
<div class="a m" style="left:18px;top:661.70px;font-size:7.4px">Connected</div>
<div class="a" style="left:100.6px;top:661px;width:1px;height:10.5px;background:#bdbdbd"></div>
<div class="a" style="left:101.6px;top:661px;width:1px;height:10.5px;background:#fff"></div>
<div class="a m" style="left:103px;top:661.70px;font-size:7.35px">D:\Software Development\Reports\Indigo DRS\Examples\GeoReport.drs</div>
<div class="a" style="left:985px;top:664.5px;width:8px;height:8px;"><svg width="8" height="8" viewBox="0 0 8 8" style="display:block;"><rect x="5.5" y="1" width="1" height="1" fill="#9c9ea2"/><rect x="6.1" y="1.6" width=".8" height=".8" fill="#fff"/><rect x="5.5" y="3.2" width="1" height="1" fill="#9c9ea2"/><rect x="6.1" y="3.8000000000000003" width=".8" height=".8" fill="#fff"/><rect x="5.5" y="5.4" width="1" height="1" fill="#9c9ea2"/><rect x="6.1" y="6.0" width=".8" height=".8" fill="#fff"/><rect x="3.3" y="3.2" width="1" height="1" fill="#9c9ea2"/><rect x="3.9" y="3.8000000000000003" width=".8" height=".8" fill="#fff"/><rect x="3.3" y="5.4" width="1" height="1" fill="#9c9ea2"/><rect x="3.9" y="6.0" width=".8" height=".8" fill="#fff"/><rect x="1.1" y="5.4" width="1" height="1" fill="#9c9ea2"/><rect x="1.7000000000000002" y="6.0" width=".8" height=".8" fill="#fff"/></svg></div>
<div class="a hd" style="left:185.2px;top:50.2px;width:600.6px;height:13.4px;">Report View</div>
<div class="a" style="left:772.6px;top:51.6px;width:9px;height:9px;"><svg width="9" height="9" viewBox="0 0 9 9" style="display:block;"><path d="M3.2 1.6L1.2 3.2L3.2 4.8M5.6 1.6L7.6 3.2L5.6 4.8" fill="none" stroke="#111" stroke-width="1.15"/><path d="M5 6.2L6.8 6.6L7.6 7.8" fill="none" stroke="#b5a96a" stroke-width=".9"/></svg></div>
<div class="a" style="left:185.4px;top:79.2px;width:599.8px;height:578.4px;background:#fff;border:1px solid #c3c5c9"></div>
<div class="a" style="left:186px;top:66px;width:42.5px;height:14px;background:#fff;border:1px solid #c2c5ca;border-bottom:none;border-radius:1.5px 1.5px 0 0"></div>
<div class="a" style="left:228.5px;top:67.6px;width:33.5px;height:12px;background:linear-gradient(180deg,#f0f0f1,#dcdddf);border:1px solid #9fa3a9;border-left:none;border-bottom:none;border-radius:0 1.5px 0 0"></div>
<div class="a" style="left:190.4px;top:68.5px;width:10.5px;height:9.5px;"><svg width="10.5" height="9.5" viewBox="0 0 10.5 9.5" style="display:block;"><defs><radialGradient id="gg105" cx=".35" cy=".3" r=".8"><stop offset="0" stop-color="#b9cfdc"/><stop offset=".4" stop-color="#2f5878"/><stop offset="1" stop-color="#0c2033"/></radialGradient></defs><rect x="5" y=".8" width="5" height="8" fill="#d6e4f6" stroke="#8fabd8" stroke-width=".5"/><circle cx="3.8" cy="4.6" r="3.5" fill="url(#gg105)" stroke="#1a2f45" stroke-width=".4"/><path d="M2 3Q3.2 2.2 4 3.2Q3.4 4.8 2.2 4.6zM4.4 5Q5.8 4.6 6 6Q5.2 7 4.4 6.2z" fill="#6f9a8a" opacity=".7"/></svg></div>
<div class="a t" style="left:204.4px;top:68.30px;font-size:7.2px;letter-spacing:-0.1px">HTML</div>
<div class="a" style="left:230.5px;top:69.5px;width:10px;height:9px;"><svg width="10" height="9" viewBox="0 0 10 9" style="display:block;"><rect x=".8" y=".5" width="2.2" height="2.4" fill="#d8242c"/><path d="M2 2.9V7" stroke="#1a2aa8" stroke-width="1.4"/><circle cx="3.4" cy="4.6" r=".9" fill="#1a2aa8"/><path d="M2 7Q2.6 8.4 4 8" stroke="#2f8f9f" stroke-width="1.1" fill="none"/><path d="M6 .9Q7.4 .9 7.2 2.6Q7 4 8.1 4.4Q7 4.8 7.2 6.2Q7.4 7.9 6 7.9" stroke="#5cba4c" stroke-width="1.1" fill="none"/><path d="M5 2.2V6.6" stroke="#9ad08a" stroke-width=".8" stroke-dasharray="1 .9"/></svg></div>
<div class="a t" style="left:245.6px;top:68.60px;font-size:7.2px;letter-spacing:-0.1px">RDL</div>
<div class="a" style="left:190px;top:82.5px;width:591.6px;height:571.6px;background:#fff;border:1px solid #b4b7bc;border-right-color:#cdd0d4;border-bottom-color:#cdd0d4"></div>
<div class="a" style="left:191px;top:636.9px;width:589.6px;height:1px;background:#cfd2d6"></div>
<div class="a v b" style="left:196.9px;top:89.8px;font-size:11.3px;line-height:16px;white-space:nowrap;text-decoration:underline;text-decoration-thickness:1.1px;text-underline-offset:1.3px;color:#000">Geo Locations Data Report</div><div class="a v" style="left:197.4px;top:116.4px;font-size:8.33px;line-height:10.4px;white-space:nowrap;color:#1c1c1c">A sample report created using Indigo DQM Data Management and Indigo DRS Data Reporting and Document Generation Software.</div><div class="a v" style="left:197.4px;top:138.4px;font-size:8.33px;line-height:10.4px;white-space:nowrap;color:#1c1c1c">Geo Data a CSV File queried and processed using Indigo DQM. The Report was created using the Indigo DRS Report Designer and then<br>loaded into Indigo DQM to create the Report output.</div><div class="a" style="left:232px;top:176px;width:412px;height:248px"><svg width="412" height="248" viewBox="0 0 412 248" style="display:block"><defs><linearGradient id="oc" x1="0" y1="0" x2="0" y2="1"><stop offset="0" stop-color="#143a55"/><stop offset="0.15" stop-color="#153e58"/><stop offset="0.25" stop-color="#16435e"/><stop offset="0.38" stop-color="#1a506e"/><stop offset="0.5" stop-color="#1b5573"/><stop offset="0.62" stop-color="#1a5170"/><stop offset="0.72" stop-color="#164560"/><stop offset="0.8" stop-color="#133c55"/><stop offset="0.9" stop-color="#10344c"/><stop offset="1" stop-color="#0f3048"/></linearGradient><filter id="b1" x="-5%" y="-5%" width="110%" height="110%"><feGaussianBlur stdDeviation="0.55"/></filter><filter id="b3" x="-20%" y="-20%" width="140%" height="140%"><feGaussianBlur stdDeviation="3"/></filter><filter id="b2" x="-20%" y="-20%" width="140%" height="140%"><feGaussianBlur stdDeviation="1.6"/></filter><clipPath id="lc"><path d="M13.7 33.8 L16.0 29.6 L26.3 26.2 L44.6 28.1 L57.2 27.6 L71.0 28.9 L82.4 30.3 L95.0 30.3 L103.0 29.6 L107.6 31.7 L112.2 28.9 L113.3 33.1 L106.4 35.8 L98.4 40.0 L98.4 43.4 L105.3 46.2 L112.2 48.2 L112.2 51.7 L115.6 53.0 L115.6 48.2 L117.9 46.2 L116.7 42.7 L116.7 37.9 L122.5 38.6 L127.0 42.7 L131.6 41.3 L136.2 46.2 L141.9 51.7 L137.3 55.1 L130.5 55.1 L125.9 59.2 L131.6 57.2 L132.8 60.6 L137.3 60.6 L130.5 62.7 L125.9 64.1 L125.9 66.8 L121.3 68.2 L119.0 71.6 L119.0 75.8 L115.6 78.5 L113.3 81.3 L114.4 86.8 L113.9 89.6 L112.2 86.8 L111.0 82.7 L107.6 82.0 L103.0 83.4 L98.4 83.4 L95.0 86.1 L94.4 93.7 L97.3 98.5 L101.9 98.5 L103.0 95.1 L106.4 94.4 L105.3 102.0 L110.4 103.3 L110.4 108.8 L113.3 112.3 L117.3 112.3 L116.7 114.4 L114.4 113.7 L111.0 112.3 L108.2 110.2 L105.9 106.1 L100.7 104.0 L97.3 102.0 L91.6 100.6 L85.8 96.4 L85.3 92.3 L81.3 86.8 L77.2 81.3 L75.0 80.6 L77.8 85.4 L80.1 92.3 L77.8 89.6 L74.4 83.4 L72.1 79.2 L68.1 76.5 L66.4 73.0 L64.1 68.9 L64.1 59.9 L65.2 57.2 L62.9 55.1 L59.5 52.4 L56.6 48.2 L52.6 44.1 L48.1 42.0 L41.2 41.3 L36.6 40.6 L32.0 42.7 L29.8 44.8 L25.2 46.2 L18.3 48.9 L25.2 43.4 L20.6 42.7 L17.2 40.0 L18.3 37.2 L21.7 35.1 L16.0 34.4Z M138.5 58.3 L145.3 59.7 L145.3 56.5 L141.9 53.0 L139.1 55.1Z M108.7 93.7 L114.4 92.3 L120.2 95.5 L121.1 96.4 L117.3 96.6 L116.7 94.4 L112.2 93.0Z M120.9 96.7 L125.9 96.7 L127.7 98.4 L124.2 99.5 L120.9 98.6Z M117.3 112.3 L120.2 108.8 L123.6 107.5 L125.9 107.5 L128.2 109.5 L135.0 109.5 L137.3 112.3 L140.8 115.7 L146.5 117.1 L148.8 123.3 L151.1 125.4 L155.6 127.4 L160.2 128.1 L163.7 130.9 L165.9 134.3 L163.7 139.2 L161.4 141.9 L161.4 147.4 L159.1 154.3 L154.5 156.4 L151.1 159.1 L150.5 162.6 L146.5 168.1 L144.2 171.5 L139.6 170.8 L140.8 175.0 L135.0 177.7 L131.6 180.5 L133.9 182.6 L131.0 186.0 L128.8 187.4 L130.5 190.1 L127.0 194.3 L128.2 197.0 L130.5 199.8 L125.9 199.8 L121.3 195.6 L120.2 188.8 L122.5 181.9 L121.9 175.0 L124.2 169.5 L124.7 162.6 L125.9 149.5 L119.0 143.3 L115.6 135.0 L113.3 130.9 L114.4 126.8 L113.9 123.3 L116.7 121.2 L117.3 117.1Z M186.5 95.1 L187.7 90.9 L191.1 86.1 L194.6 82.7 L195.1 78.5 L199.1 75.1 L203.7 75.8 L209.4 73.0 L217.4 73.0 L218.6 77.2 L223.2 79.2 L228.9 81.3 L228.9 78.9 L234.6 79.9 L241.5 80.9 L244.9 81.3 L246.1 85.4 L244.9 86.8 L247.2 92.3 L248.3 95.1 L250.1 99.2 L252.9 104.0 L255.2 107.5 L256.4 109.5 L264.4 107.5 L263.8 111.6 L260.9 117.1 L256.4 122.6 L252.9 126.8 L250.6 132.3 L251.8 137.8 L252.3 144.7 L246.1 151.6 L246.6 157.1 L243.8 159.8 L241.5 165.3 L236.9 170.8 L228.9 171.9 L226.6 169.5 L224.3 162.6 L222.0 154.3 L219.7 147.4 L221.4 139.2 L219.7 131.6 L216.3 125.4 L216.9 119.9 L215.2 117.8 L211.7 115.7 L207.1 115.7 L201.4 117.1 L196.8 117.8 L193.4 114.4 L190.6 110.9 L187.1 107.5 L186.0 103.7 L187.7 99.2Z M262.4 140.5 L263.8 145.4 L260.4 157.8 L257.5 159.1 L255.8 154.3 L256.4 147.4 L259.8 144.7Z M195.7 73.0 L195.7 64.8 L203.7 64.1 L204.3 60.6 L200.8 57.2 L204.9 56.5 L208.3 53.7 L210.6 52.4 L215.2 49.6 L215.7 45.5 L218.0 44.8 L217.4 48.9 L222.0 49.6 L227.7 48.9 L230.0 45.5 L233.5 44.8 L232.9 42.0 L238.0 41.3 L240.3 41.3 L232.3 41.3 L230.6 37.2 L234.6 33.8 L231.2 33.5 L225.5 38.6 L227.2 41.3 L224.9 46.2 L220.9 47.5 L218.6 42.7 L214.6 44.1 L211.7 41.3 L211.7 38.6 L218.6 35.1 L222.0 30.3 L228.9 27.6 L235.2 26.2 L241.5 27.6 L252.9 31.7 L252.9 33.1 L246.1 32.4 L243.8 32.1 L246.1 35.4 L248.9 35.1 L251.8 34.4 L256.4 33.1 L256.4 29.6 L267.8 29.6 L274.7 28.9 L283.8 29.6 L282.7 25.5 L289.5 24.1 L289.5 28.9 L291.8 24.8 L298.7 22.7 L305.6 20.7 L318.2 19.0 L325.0 16.9 L335.3 19.3 L328.5 22.7 L336.5 22.5 L351.3 23.4 L355.9 26.2 L366.2 23.8 L377.7 25.5 L389.1 27.6 L400.6 28.0 L412.0 28.9 L412.0 34.4 L409.1 35.1 L410.9 37.9 L401.7 40.6 L394.8 41.3 L393.1 44.1 L391.4 46.8 L391.4 48.9 L389.1 51.0 L385.1 53.7 L384.0 46.8 L385.1 44.1 L391.4 40.6 L393.7 37.9 L389.1 39.3 L383.4 42.0 L377.7 42.0 L369.7 42.0 L366.2 44.8 L361.1 48.9 L367.4 51.0 L366.8 55.1 L363.9 59.9 L358.2 64.8 L355.4 65.4 L352.5 68.9 L354.2 73.0 L353.6 75.8 L350.8 76.5 L350.2 72.3 L349.1 69.6 L345.1 70.3 L345.6 68.2 L341.0 70.3 L342.2 72.3 L346.2 73.0 L342.8 75.8 L345.1 79.9 L345.6 82.7 L344.5 85.4 L342.2 89.6 L338.8 92.3 L335.3 93.7 L331.9 94.4 L330.2 94.1 L327.3 97.8 L330.2 102.6 L331.1 107.5 L328.5 109.5 L326.2 111.6 L326.2 109.5 L323.9 108.8 L320.4 105.4 L319.9 110.2 L321.6 114.4 L324.4 118.5 L325.0 121.9 L322.2 120.3 L321.0 115.7 L318.7 112.3 L318.7 107.5 L317.6 101.3 L314.1 102.0 L313.6 97.8 L310.7 93.0 L307.9 93.7 L305.6 95.1 L303.3 97.1 L299.8 101.3 L297.6 103.3 L297.6 108.8 L294.7 113.0 L293.0 109.5 L290.7 102.6 L289.3 96.4 L286.7 95.1 L285.0 93.0 L282.7 89.6 L277.0 89.1 L271.8 88.6 L270.7 86.8 L265.5 85.8 L263.2 82.7 L260.9 82.7 L263.2 87.5 L264.9 90.9 L267.8 90.9 L270.1 88.2 L271.2 90.9 L274.4 93.0 L271.8 97.8 L268.9 100.6 L265.5 102.6 L257.5 106.4 L255.6 106.5 L254.6 101.3 L250.6 95.1 L248.3 89.6 L246.1 85.4 L244.9 81.3 L246.1 78.5 L247.2 74.4 L242.6 73.7 L238.0 73.4 L236.3 71.0 L236.3 68.9 L239.2 67.5 L242.6 66.1 L247.2 66.8 L253.5 66.8 L250.6 63.4 L248.9 62.0 L250.6 59.2 L246.1 60.6 L244.3 62.7 L242.6 59.9 L240.3 61.3 L238.6 64.1 L238.0 66.8 L235.8 67.9 L232.9 68.2 L232.3 71.6 L231.8 73.7 L230.0 71.6 L228.3 68.2 L228.3 66.1 L223.7 63.4 L221.7 61.3 L220.1 62.0 L220.3 63.4 L224.3 66.8 L227.2 68.9 L224.9 69.6 L224.3 71.6 L224.0 68.9 L220.3 66.8 L217.8 64.8 L216.0 62.8 L212.9 64.8 L210.0 64.3 L209.4 66.4 L206.0 68.9 L206.0 70.7 L203.7 73.3 L199.7 74.4Z M0.0 28.9 L4.6 31.0 L11.4 33.1 L9.2 35.1 L2.3 33.8 L0.0 34.4Z M199.7 55.1 L207.7 53.7 L207.9 51.4 L206.0 50.3 L204.3 48.2 L203.7 46.8 L203.7 44.8 L201.4 44.4 L202.6 43.1 L200.3 43.4 L199.1 44.8 L200.3 46.8 L200.3 48.6 L202.6 49.6 L202.6 50.6 L200.8 51.0 L201.4 52.4 L200.0 52.8 L202.6 53.3Z M194.6 53.0 L198.8 52.4 L199.1 50.3 L199.7 48.9 L198.0 47.8 L196.3 48.9 L194.6 49.6Z M355.8 77.2 L357.1 77.4 L360.5 77.8 L362.8 76.2 L366.2 75.8 L367.4 71.6 L367.9 68.2 L366.2 67.9 L365.9 71.6 L362.8 73.0 L361.6 74.8 L358.2 75.1Z M366.2 66.1 L367.4 66.8 L370.2 66.1 L372.5 64.3 L370.8 63.4 L368.5 61.4 L367.9 64.3Z M354.8 77.8 L356.7 77.8 L356.5 80.6 L355.1 80.9 L354.4 78.5Z M368.5 49.6 L369.7 52.4 L370.0 55.8 L369.7 59.9 L368.5 60.6 L368.5 55.1 L368.2 52.4Z M344.5 89.6 L345.6 89.6 L344.5 93.7 L343.3 92.3Z M343.9 98.5 L345.9 98.8 L345.6 102.0 L347.9 106.1 L346.8 105.4 L344.5 104.7 L343.3 103.3Z M345.6 114.4 L347.9 112.3 L350.8 111.6 L350.5 115.0 L349.4 115.7 L347.9 115.3Z M346.8 108.8 L349.1 106.8 L349.6 109.5 L346.8 110.9Z M330.7 121.9 L333.6 121.2 L335.9 119.2 L338.8 115.7 L340.5 115.0 L342.2 117.1 L340.5 119.9 L341.6 122.6 L340.5 124.7 L339.3 128.1 L338.8 129.5 L336.5 128.8 L333.0 128.1 L331.9 126.1Z M315.1 116.4 L317.6 116.8 L321.0 120.6 L324.4 124.0 L327.1 128.1 L327.1 132.0 L325.0 131.6 L321.6 127.4 L318.7 121.9 L315.9 119.2Z M326.5 133.0 L330.2 133.2 L333.0 133.0 L337.0 134.3 L336.8 135.8 L331.9 135.0 L327.9 134.1Z M338.2 135.3 L342.2 135.4 L346.8 135.4 L349.1 135.7 L347.9 137.8 L343.3 137.1 L338.8 136.4Z M342.8 123.3 L344.5 122.3 L349.1 121.9 L347.3 123.4 L343.9 123.6 L345.1 125.4 L347.1 125.4 L345.6 126.8 L346.5 130.2 L345.1 130.2 L344.5 127.9 L343.7 128.1 L343.7 131.6 L342.8 131.6 L342.2 128.1Z M355.9 125.1 L359.4 125.1 L360.5 128.5 L363.9 126.3 L367.4 127.6 L371.9 130.2 L374.8 132.3 L375.4 135.0 L378.2 138.5 L374.2 137.8 L370.8 134.6 L367.4 136.4 L363.9 135.4 L363.9 133.0 L359.9 129.5 L357.6 129.5 L357.1 127.4Z M297.6 110.6 L299.6 113.7 L298.7 115.7 L297.6 115.7 L297.3 113.0Z M336.5 154.3 L336.5 159.8 L337.6 166.7 L337.6 171.3 L341.0 172.2 L347.9 170.2 L353.6 167.7 L356.5 167.4 L360.5 171.8 L363.9 169.5 L363.9 172.9 L366.8 176.4 L370.8 177.0 L374.2 177.0 L377.7 175.4 L378.8 170.8 L381.1 166.7 L381.7 161.9 L381.1 159.1 L378.8 156.4 L376.5 152.2 L373.4 150.2 L372.5 144.7 L370.2 143.3 L369.1 138.9 L367.9 141.9 L367.4 148.1 L365.1 148.1 L361.1 144.7 L362.8 140.5 L357.6 139.8 L354.8 141.9 L353.6 144.7 L350.2 143.3 L345.6 148.1 L342.2 151.6Z M371.6 180.1 L375.7 180.2 L375.4 183.2 L373.7 183.9 L372.3 182.6Z M403.6 171.4 L405.7 174.3 L407.4 175.7 L410.3 175.9 L408.6 178.4 L408.0 180.5 L406.0 180.9 L406.3 179.1 L404.8 178.0 L406.0 175.7Z M403.6 179.8 L405.4 181.2 L404.0 183.9 L401.7 186.0 L401.1 187.8 L398.8 188.2 L396.6 187.4 L398.3 184.6 L401.7 182.6Z M330.4 97.5 L332.5 96.4 L333.0 97.1 L331.3 98.9Z M215.5 67.5 L217.1 67.5 L217.0 70.3 L215.7 70.3Z M220.3 71.6 L223.7 71.4 L223.2 73.4 L220.5 72.3Z M232.9 75.1 L236.0 75.4 L235.8 75.8 L233.0 75.5Z M243.0 75.8 L245.5 75.0 L244.7 76.2Z M114.4 22.7 L123.6 25.5 L130.5 31.0 L135.0 33.1 L131.6 37.9 L125.9 37.9 L122.5 35.1 L116.7 34.4 L121.3 30.3 L114.4 27.6 L105.3 26.2 L104.1 22.7Z M72.1 27.6 L85.8 29.6 L90.4 27.6 L85.8 23.4 L75.5 23.4Z M62.9 24.8 L68.7 26.2 L73.2 22.7 L66.4 20.7Z M103.0 18.6 L116.7 18.6 L123.6 15.8 L135.0 11.0 L125.9 9.6 L108.7 11.0 L100.7 13.8Z M100.7 20.7 L114.4 20.7 L112.2 18.6 L100.7 18.6Z M71.0 20.7 L85.8 20.7 L91.6 18.6 L80.1 16.5 L68.7 17.9Z M91.6 24.8 L98.4 24.8 L103.0 22.0 L96.1 21.4 L89.3 22.7Z M178.5 33.8 L180.8 35.8 L185.4 36.5 L190.0 35.1 L189.4 33.1 L185.4 32.7 L180.8 32.7Z M218.6 15.2 L224.3 13.8 L236.9 13.8 L231.2 16.5 L226.6 18.3 L222.0 17.2Z M265.5 26.2 L271.2 26.6 L270.1 23.4 L274.7 20.0 L283.8 17.9 L281.5 19.3 L272.4 22.0 L267.8 24.1Z M315.9 15.2 L325.0 15.2 L320.4 12.4Z M363.9 20.7 L371.9 20.7 L375.4 19.3 L366.2 19.3Z M260.9 13.8 L274.7 13.8 L277.0 12.4 L268.9 11.7Z"/></clipPath><clipPath id="mc"><rect x="0" y="0" width="412" height="248"/></clipPath></defs><g clip-path="url(#mc)"><rect width="412" height="248" fill="url(#oc)"/><path d="M0.0 0.0 L412.0 0.0 L412.0 24.8 L400.6 24.1 L389.1 22.7 L377.7 20.7 L366.2 18.6 L349.1 17.2 L331.9 15.2 L314.7 11.7 L297.6 11.0 L274.7 10.3 L251.8 11.0 L228.9 11.7 L206.0 11.0 L194.6 10.3 L183.1 13.8 L137.3 12.4 L120.2 16.5 L114.4 20.7 L97.3 22.0 L80.1 24.8 L62.9 25.5 L45.8 26.9 L27.5 25.5 L17.2 27.6 L9.2 30.3 L0.0 28.9Z" fill="#e6e3e6" filter="url(#b2)"/><g filter="url(#b1)"><path d="M13.7 33.8 L16.0 29.6 L26.3 26.2 L44.6 28.1 L57.2 27.6 L71.0 28.9 L82.4 30.3 L95.0 30.3 L103.0 29.6 L107.6 31.7 L112.2 28.9 L113.3 33.1 L106.4 35.8 L98.4 40.0 L98.4 43.4 L105.3 46.2 L112.2 48.2 L112.2 51.7 L115.6 53.0 L115.6 48.2 L117.9 46.2 L116.7 42.7 L116.7 37.9 L122.5 38.6 L127.0 42.7 L131.6 41.3 L136.2 46.2 L141.9 51.7 L137.3 55.1 L130.5 55.1 L125.9 59.2 L131.6 57.2 L132.8 60.6 L137.3 60.6 L130.5 62.7 L125.9 64.1 L125.9 66.8 L121.3 68.2 L119.0 71.6 L119.0 75.8 L115.6 78.5 L113.3 81.3 L114.4 86.8 L113.9 89.6 L112.2 86.8 L111.0 82.7 L107.6 82.0 L103.0 83.4 L98.4 83.4 L95.0 86.1 L94.4 93.7 L97.3 98.5 L101.9 98.5 L103.0 95.1 L106.4 94.4 L105.3 102.0 L110.4 103.3 L110.4 108.8 L113.3 112.3 L117.3 112.3 L116.7 114.4 L114.4 113.7 L111.0 112.3 L108.2 110.2 L105.9 106.1 L100.7 104.0 L97.3 102.0 L91.6 100.6 L85.8 96.4 L85.3 92.3 L81.3 86.8 L77.2 81.3 L75.0 80.6 L77.8 85.4 L80.1 92.3 L77.8 89.6 L74.4 83.4 L72.1 79.2 L68.1 76.5 L66.4 73.0 L64.1 68.9 L64.1 59.9 L65.2 57.2 L62.9 55.1 L59.5 52.4 L56.6 48.2 L52.6 44.1 L48.1 42.0 L41.2 41.3 L36.6 40.6 L32.0 42.7 L29.8 44.8 L25.2 46.2 L18.3 48.9 L25.2 43.4 L20.6 42.7 L17.2 40.0 L18.3 37.2 L21.7 35.1 L16.0 34.4Z M138.5 58.3 L145.3 59.7 L145.3 56.5 L141.9 53.0 L139.1 55.1Z M108.7 93.7 L114.4 92.3 L120.2 95.5 L121.1 96.4 L117.3 96.6 L116.7 94.4 L112.2 93.0Z M120.9 96.7 L125.9 96.7 L127.7 98.4 L124.2 99.5 L120.9 98.6Z M117.3 112.3 L120.2 108.8 L123.6 107.5 L125.9 107.5 L128.2 109.5 L135.0 109.5 L137.3 112.3 L140.8 115.7 L146.5 117.1 L148.8 123.3 L151.1 125.4 L155.6 127.4 L160.2 128.1 L163.7 130.9 L165.9 134.3 L163.7 139.2 L161.4 141.9 L161.4 147.4 L159.1 154.3 L154.5 156.4 L151.1 159.1 L150.5 162.6 L146.5 168.1 L144.2 171.5 L139.6 170.8 L140.8 175.0 L135.0 177.7 L131.6 180.5 L133.9 182.6 L131.0 186.0 L128.8 187.4 L130.5 190.1 L127.0 194.3 L128.2 197.0 L130.5 199.8 L125.9 199.8 L121.3 195.6 L120.2 188.8 L122.5 181.9 L121.9 175.0 L124.2 169.5 L124.7 162.6 L125.9 149.5 L119.0 143.3 L115.6 135.0 L113.3 130.9 L114.4 126.8 L113.9 123.3 L116.7 121.2 L117.3 117.1Z M186.5 95.1 L187.7 90.9 L191.1 86.1 L194.6 82.7 L195.1 78.5 L199.1 75.1 L203.7 75.8 L209.4 73.0 L217.4 73.0 L218.6 77.2 L223.2 79.2 L228.9 81.3 L228.9 78.9 L234.6 79.9 L241.5 80.9 L244.9 81.3 L246.1 85.4 L244.9 86.8 L247.2 92.3 L248.3 95.1 L250.1 99.2 L252.9 104.0 L255.2 107.5 L256.4 109.5 L264.4 107.5 L263.8 111.6 L260.9 117.1 L256.4 122.6 L252.9 126.8 L250.6 132.3 L251.8 137.8 L252.3 144.7 L246.1 151.6 L246.6 157.1 L243.8 159.8 L241.5 165.3 L236.9 170.8 L228.9 171.9 L226.6 169.5 L224.3 162.6 L222.0 154.3 L219.7 147.4 L221.4 139.2 L219.7 131.6 L216.3 125.4 L216.9 119.9 L215.2 117.8 L211.7 115.7 L207.1 115.7 L201.4 117.1 L196.8 117.8 L193.4 114.4 L190.6 110.9 L187.1 107.5 L186.0 103.7 L187.7 99.2Z M262.4 140.5 L263.8 145.4 L260.4 157.8 L257.5 159.1 L255.8 154.3 L256.4 147.4 L259.8 144.7Z M195.7 73.0 L195.7 64.8 L203.7 64.1 L204.3 60.6 L200.8 57.2 L204.9 56.5 L208.3 53.7 L210.6 52.4 L215.2 49.6 L215.7 45.5 L218.0 44.8 L217.4 48.9 L222.0 49.6 L227.7 48.9 L230.0 45.5 L233.5 44.8 L232.9 42.0 L238.0 41.3 L240.3 41.3 L232.3 41.3 L230.6 37.2 L234.6 33.8 L231.2 33.5 L225.5 38.6 L227.2 41.3 L224.9 46.2 L220.9 47.5 L218.6 42.7 L214.6 44.1 L211.7 41.3 L211.7 38.6 L218.6 35.1 L222.0 30.3 L228.9 27.6 L235.2 26.2 L241.5 27.6 L252.9 31.7 L252.9 33.1 L246.1 32.4 L243.8 32.1 L246.1 35.4 L248.9 35.1 L251.8 34.4 L256.4 33.1 L256.4 29.6 L267.8 29.6 L274.7 28.9 L283.8 29.6 L282.7 25.5 L289.5 24.1 L289.5 28.9 L291.8 24.8 L298.7 22.7 L305.6 20.7 L318.2 19.0 L325.0 16.9 L335.3 19.3 L328.5 22.7 L336.5 22.5 L351.3 23.4 L355.9 26.2 L366.2 23.8 L377.7 25.5 L389.1 27.6 L400.6 28.0 L412.0 28.9 L412.0 34.4 L409.1 35.1 L410.9 37.9 L401.7 40.6 L394.8 41.3 L393.1 44.1 L391.4 46.8 L391.4 48.9 L389.1 51.0 L385.1 53.7 L384.0 46.8 L385.1 44.1 L391.4 40.6 L393.7 37.9 L389.1 39.3 L383.4 42.0 L377.7 42.0 L369.7 42.0 L366.2 44.8 L361.1 48.9 L367.4 51.0 L366.8 55.1 L363.9 59.9 L358.2 64.8 L355.4 65.4 L352.5 68.9 L354.2 73.0 L353.6 75.8 L350.8 76.5 L350.2 72.3 L349.1 69.6 L345.1 70.3 L345.6 68.2 L341.0 70.3 L342.2 72.3 L346.2 73.0 L342.8 75.8 L345.1 79.9 L345.6 82.7 L344.5 85.4 L342.2 89.6 L338.8 92.3 L335.3 93.7 L331.9 94.4 L330.2 94.1 L327.3 97.8 L330.2 102.6 L331.1 107.5 L328.5 109.5 L326.2 111.6 L326.2 109.5 L323.9 108.8 L320.4 105.4 L319.9 110.2 L321.6 114.4 L324.4 118.5 L325.0 121.9 L322.2 120.3 L321.0 115.7 L318.7 112.3 L318.7 107.5 L317.6 101.3 L314.1 102.0 L313.6 97.8 L310.7 93.0 L307.9 93.7 L305.6 95.1 L303.3 97.1 L299.8 101.3 L297.6 103.3 L297.6 108.8 L294.7 113.0 L293.0 109.5 L290.7 102.6 L289.3 96.4 L286.7 95.1 L285.0 93.0 L282.7 89.6 L277.0 89.1 L271.8 88.6 L270.7 86.8 L265.5 85.8 L263.2 82.7 L260.9 82.7 L263.2 87.5 L264.9 90.9 L267.8 90.9 L270.1 88.2 L271.2 90.9 L274.4 93.0 L271.8 97.8 L268.9 100.6 L265.5 102.6 L257.5 106.4 L255.6 106.5 L254.6 101.3 L250.6 95.1 L248.3 89.6 L246.1 85.4 L244.9 81.3 L246.1 78.5 L247.2 74.4 L242.6 73.7 L238.0 73.4 L236.3 71.0 L236.3 68.9 L239.2 67.5 L242.6 66.1 L247.2 66.8 L253.5 66.8 L250.6 63.4 L248.9 62.0 L250.6 59.2 L246.1 60.6 L244.3 62.7 L242.6 59.9 L240.3 61.3 L238.6 64.1 L238.0 66.8 L235.8 67.9 L232.9 68.2 L232.3 71.6 L231.8 73.7 L230.0 71.6 L228.3 68.2 L228.3 66.1 L223.7 63.4 L221.7 61.3 L220.1 62.0 L220.3 63.4 L224.3 66.8 L227.2 68.9 L224.9 69.6 L224.3 71.6 L224.0 68.9 L220.3 66.8 L217.8 64.8 L216.0 62.8 L212.9 64.8 L210.0 64.3 L209.4 66.4 L206.0 68.9 L206.0 70.7 L203.7 73.3 L199.7 74.4Z M0.0 28.9 L4.6 31.0 L11.4 33.1 L9.2 35.1 L2.3 33.8 L0.0 34.4Z M199.7 55.1 L207.7 53.7 L207.9 51.4 L206.0 50.3 L204.3 48.2 L203.7 46.8 L203.7 44.8 L201.4 44.4 L202.6 43.1 L200.3 43.4 L199.1 44.8 L200.3 46.8 L200.3 48.6 L202.6 49.6 L202.6 50.6 L200.8 51.0 L201.4 52.4 L200.0 52.8 L202.6 53.3Z M194.6 53.0 L198.8 52.4 L199.1 50.3 L199.7 48.9 L198.0 47.8 L196.3 48.9 L194.6 49.6Z M355.8 77.2 L357.1 77.4 L360.5 77.8 L362.8 76.2 L366.2 75.8 L367.4 71.6 L367.9 68.2 L366.2 67.9 L365.9 71.6 L362.8 73.0 L361.6 74.8 L358.2 75.1Z M366.2 66.1 L367.4 66.8 L370.2 66.1 L372.5 64.3 L370.8 63.4 L368.5 61.4 L367.9 64.3Z M354.8 77.8 L356.7 77.8 L356.5 80.6 L355.1 80.9 L354.4 78.5Z M368.5 49.6 L369.7 52.4 L370.0 55.8 L369.7 59.9 L368.5 60.6 L368.5 55.1 L368.2 52.4Z M344.5 89.6 L345.6 89.6 L344.5 93.7 L343.3 92.3Z M343.9 98.5 L345.9 98.8 L345.6 102.0 L347.9 106.1 L346.8 105.4 L344.5 104.7 L343.3 103.3Z M345.6 114.4 L347.9 112.3 L350.8 111.6 L350.5 115.0 L349.4 115.7 L347.9 115.3Z M346.8 108.8 L349.1 106.8 L349.6 109.5 L346.8 110.9Z M330.7 121.9 L333.6 121.2 L335.9 119.2 L338.8 115.7 L340.5 115.0 L342.2 117.1 L340.5 119.9 L341.6 122.6 L340.5 124.7 L339.3 128.1 L338.8 129.5 L336.5 128.8 L333.0 128.1 L331.9 126.1Z M315.1 116.4 L317.6 116.8 L321.0 120.6 L324.4 124.0 L327.1 128.1 L327.1 132.0 L325.0 131.6 L321.6 127.4 L318.7 121.9 L315.9 119.2Z M326.5 133.0 L330.2 133.2 L333.0 133.0 L337.0 134.3 L336.8 135.8 L331.9 135.0 L327.9 134.1Z M338.2 135.3 L342.2 135.4 L346.8 135.4 L349.1 135.7 L347.9 137.8 L343.3 137.1 L338.8 136.4Z M342.8 123.3 L344.5 122.3 L349.1 121.9 L347.3 123.4 L343.9 123.6 L345.1 125.4 L347.1 125.4 L345.6 126.8 L346.5 130.2 L345.1 130.2 L344.5 127.9 L343.7 128.1 L343.7 131.6 L342.8 131.6 L342.2 128.1Z M355.9 125.1 L359.4 125.1 L360.5 128.5 L363.9 126.3 L367.4 127.6 L371.9 130.2 L374.8 132.3 L375.4 135.0 L378.2 138.5 L374.2 137.8 L370.8 134.6 L367.4 136.4 L363.9 135.4 L363.9 133.0 L359.9 129.5 L357.6 129.5 L357.1 127.4Z M297.6 110.6 L299.6 113.7 L298.7 115.7 L297.6 115.7 L297.3 113.0Z M336.5 154.3 L336.5 159.8 L337.6 166.7 L337.6 171.3 L341.0 172.2 L347.9 170.2 L353.6 167.7 L356.5 167.4 L360.5 171.8 L363.9 169.5 L363.9 172.9 L366.8 176.4 L370.8 177.0 L374.2 177.0 L377.7 175.4 L378.8 170.8 L381.1 166.7 L381.7 161.9 L381.1 159.1 L378.8 156.4 L376.5 152.2 L373.4 150.2 L372.5 144.7 L370.2 143.3 L369.1 138.9 L367.9 141.9 L367.4 148.1 L365.1 148.1 L361.1 144.7 L362.8 140.5 L357.6 139.8 L354.8 141.9 L353.6 144.7 L350.2 143.3 L345.6 148.1 L342.2 151.6Z M371.6 180.1 L375.7 180.2 L375.4 183.2 L373.7 183.9 L372.3 182.6Z M403.6 171.4 L405.7 174.3 L407.4 175.7 L410.3 175.9 L408.6 178.4 L408.0 180.5 L406.0 180.9 L406.3 179.1 L404.8 178.0 L406.0 175.7Z M403.6 179.8 L405.4 181.2 L404.0 183.9 L401.7 186.0 L401.1 187.8 L398.8 188.2 L396.6 187.4 L398.3 184.6 L401.7 182.6Z M330.4 97.5 L332.5 96.4 L333.0 97.1 L331.3 98.9Z M215.5 67.5 L217.1 67.5 L217.0 70.3 L215.7 70.3Z M220.3 71.6 L223.7 71.4 L223.2 73.4 L220.5 72.3Z M232.9 75.1 L236.0 75.4 L235.8 75.8 L233.0 75.5Z M243.0 75.8 L245.5 75.0 L244.7 76.2Z" fill="#9a9468"/><path d="M114.4 22.7 L123.6 25.5 L130.5 31.0 L135.0 33.1 L131.6 37.9 L125.9 37.9 L122.5 35.1 L116.7 34.4 L121.3 30.3 L114.4 27.6 L105.3 26.2 L104.1 22.7Z M72.1 27.6 L85.8 29.6 L90.4 27.6 L85.8 23.4 L75.5 23.4Z M62.9 24.8 L68.7 26.2 L73.2 22.7 L66.4 20.7Z M103.0 18.6 L116.7 18.6 L123.6 15.8 L135.0 11.0 L125.9 9.6 L108.7 11.0 L100.7 13.8Z M100.7 20.7 L114.4 20.7 L112.2 18.6 L100.7 18.6Z M71.0 20.7 L85.8 20.7 L91.6 18.6 L80.1 16.5 L68.7 17.9Z M91.6 24.8 L98.4 24.8 L103.0 22.0 L96.1 21.4 L89.3 22.7Z M178.5 33.8 L180.8 35.8 L185.4 36.5 L190.0 35.1 L189.4 33.1 L185.4 32.7 L180.8 32.7Z M218.6 15.2 L224.3 13.8 L236.9 13.8 L231.2 16.5 L226.6 18.3 L222.0 17.2Z M265.5 26.2 L271.2 26.6 L270.1 23.4 L274.7 20.0 L283.8 17.9 L281.5 19.3 L272.4 22.0 L267.8 24.1Z M315.9 15.2 L325.0 15.2 L320.4 12.4Z M363.9 20.7 L371.9 20.7 L375.4 19.3 L366.2 19.3Z M260.9 13.8 L274.7 13.8 L277.0 12.4 L268.9 11.7Z" fill="#cfc4bd"/></g><g clip-path="url(#lc)"><g filter="url(#b3)"><ellipse cx="135.0" cy="129.5" rx="17.2" ry="15.2" fill="#54703a" opacity="1"/><ellipse cx="141.9" cy="119.9" rx="10.3" ry="6.9" fill="#56703a" opacity="0.9"/><ellipse cx="122.5" cy="118.5" rx="5.7" ry="8.3" fill="#5d753e" opacity="0.9"/><ellipse cx="228.9" cy="124.0" rx="11.4" ry="8.3" fill="#607a40" opacity="1"/><ellipse cx="200.3" cy="114.4" rx="12.6" ry="4.1" fill="#6f8246" opacity="0.95"/><ellipse cx="240.3" cy="135.0" rx="6.9" ry="8.3" fill="#74824a" opacity="0.7"/><ellipse cx="259.8" cy="150.2" rx="3.4" ry="8.3" fill="#7a8a4c" opacity="0.8"/><ellipse cx="114.4" cy="67.5" rx="12.6" ry="12.4" fill="#667a40" opacity="1"/><ellipse cx="91.6" cy="48.2" rx="36.6" ry="8.3" fill="#6a7748" opacity="0.95"/><ellipse cx="34.3" cy="35.8" rx="16.0" ry="5.5" fill="#777c55" opacity="0.9"/><ellipse cx="65.2" cy="55.1" rx="4.6" ry="11.0" fill="#5f7440" opacity="0.9"/><ellipse cx="105.3" cy="102.0" rx="6.9" ry="5.5" fill="#5f7a3f" opacity="1"/><ellipse cx="91.6" cy="97.8" rx="5.7" ry="4.1" fill="#76854a" opacity="0.8"/><ellipse cx="219.7" cy="56.5" rx="22.9" ry="9.6" fill="#6b8046" opacity="1"/><ellipse cx="274.7" cy="44.1" rx="48.1" ry="9.6" fill="#5d6e3f" opacity="1"/><ellipse cx="337.6" cy="41.3" rx="43.5" ry="11.0" fill="#5f6d40" opacity="1"/><ellipse cx="314.7" cy="35.8" rx="51.5" ry="5.5" fill="#586a3c" opacity="0.8"/><ellipse cx="234.6" cy="38.6" rx="11.4" ry="6.9" fill="#74805a" opacity="0.8"/><ellipse cx="329.6" cy="90.9" rx="13.7" ry="12.4" fill="#6e8049" opacity="0.95"/><ellipse cx="322.7" cy="104.7" rx="8.0" ry="11.0" fill="#5f7a40" opacity="0.95"/><ellipse cx="335.3" cy="124.0" rx="9.2" ry="8.3" fill="#71864e" opacity="1"/><ellipse cx="322.7" cy="124.0" rx="5.7" ry="6.9" fill="#71864e" opacity="1"/><ellipse cx="366.2" cy="130.9" rx="10.3" ry="5.5" fill="#6d844b" opacity="1"/><ellipse cx="345.6" cy="110.2" rx="4.6" ry="11.0" fill="#75884f" opacity="1"/><ellipse cx="363.9" cy="73.0" rx="6.9" ry="8.3" fill="#64793f" opacity="1"/><ellipse cx="352.5" cy="62.0" rx="9.2" ry="8.3" fill="#6b7a45" opacity="0.9"/><ellipse cx="296.4" cy="97.8" rx="5.7" ry="11.0" fill="#8b8a58" opacity="0.8"/><ellipse cx="311.3" cy="90.9" rx="5.7" ry="4.1" fill="#647a40" opacity="0.9"/><ellipse cx="376.5" cy="165.3" rx="3.4" ry="12.4" fill="#7d8750" opacity="0.9"/><ellipse cx="402.8" cy="180.5" rx="5.7" ry="6.9" fill="#73844a" opacity="1"/><ellipse cx="139.6" cy="162.6" rx="6.9" ry="8.3" fill="#7a8a4c" opacity="0.8"/><ellipse cx="212.9" cy="90.9" rx="30.9" ry="13.8" fill="#dcc59c" opacity="1"/><ellipse cx="238.0" cy="92.3" rx="10.3" ry="12.4" fill="#dac197" opacity="1"/><ellipse cx="195.7" cy="89.6" rx="9.2" ry="8.3" fill="#d6bb90" opacity="1"/><ellipse cx="258.6" cy="92.3" rx="11.4" ry="12.4" fill="#d8bc92" opacity="1"/><ellipse cx="271.2" cy="81.3" rx="10.3" ry="8.3" fill="#c9ad86" opacity="1"/><ellipse cx="282.7" cy="84.0" rx="5.7" ry="5.5" fill="#c6aa82" opacity="0.95"/><ellipse cx="278.1" cy="66.1" rx="14.9" ry="6.9" fill="#c3aa82" opacity="0.95"/><ellipse cx="304.4" cy="68.9" rx="10.3" ry="5.5" fill="#d6bd94" opacity="1"/><ellipse cx="323.9" cy="66.1" rx="13.7" ry="6.2" fill="#ccb189" opacity="1"/><ellipse cx="306.7" cy="78.5" rx="11.4" ry="5.0" fill="#e2d8ca" opacity="1"/><ellipse cx="288.4" cy="88.2" rx="4.0" ry="4.8" fill="#c9ae84" opacity="0.9"/><ellipse cx="255.2" cy="115.7" rx="8.0" ry="9.6" fill="#c6a476" opacity="0.95"/><ellipse cx="248.3" cy="104.7" rx="5.7" ry="5.5" fill="#b39a68" opacity="0.7"/><ellipse cx="230.0" cy="157.1" rx="10.3" ry="11.0" fill="#cba780" opacity="1"/><ellipse cx="225.5" cy="143.3" rx="5.7" ry="6.9" fill="#bfa273" opacity="0.8"/><ellipse cx="246.1" cy="148.8" rx="5.7" ry="8.3" fill="#b79c6c" opacity="0.7"/><ellipse cx="357.1" cy="158.4" rx="18.3" ry="11.0" fill="#cb9966" opacity="1"/><ellipse cx="344.5" cy="161.2" rx="6.9" ry="8.3" fill="#cf9f6c" opacity="0.95"/><ellipse cx="369.7" cy="154.3" rx="5.7" ry="8.3" fill="#b99a68" opacity="0.8"/><ellipse cx="77.8" cy="71.6" rx="9.2" ry="12.4" fill="#cbb794" opacity="1"/><ellipse cx="87.0" cy="86.8" rx="6.9" ry="8.3" fill="#c0a97e" opacity="0.95"/><ellipse cx="89.3" cy="62.0" rx="6.9" ry="8.3" fill="#aaa274" opacity="0.8"/><ellipse cx="76.7" cy="84.0" rx="3.4" ry="5.5" fill="#c9b28a" opacity="0.9"/><ellipse cx="125.9" cy="157.1" rx="3.4" ry="19.3" fill="#c6a886" opacity="1"/><ellipse cx="128.2" cy="184.6" rx="5.2" ry="12.4" fill="#bba486" opacity="1"/><ellipse cx="159.1" cy="136.4" rx="6.9" ry="11.0" fill="#c6a270" opacity="0.95"/><ellipse cx="120.2" cy="137.8" rx="3.4" ry="8.3" fill="#b0976c" opacity="0.8"/><ellipse cx="151.1" cy="148.8" rx="5.7" ry="6.9" fill="#a99a62" opacity="0.6"/><ellipse cx="91.6" cy="33.1" rx="41.2" ry="5.5" fill="#a59a86" opacity="0.95"/><ellipse cx="34.3" cy="28.9" rx="16.0" ry="3.4" fill="#a7a08c" opacity="0.9"/><ellipse cx="123.6" cy="44.1" rx="9.2" ry="5.5" fill="#8f8d70" opacity="0.8"/><ellipse cx="320.4" cy="26.2" rx="71.0" ry="4.8" fill="#a19984" opacity="0.9"/><ellipse cx="394.8" cy="33.1" rx="22.9" ry="4.8" fill="#918d72" opacity="0.8"/><ellipse cx="223.2" cy="33.1" rx="9.2" ry="5.5" fill="#b3b5a0" opacity="0.75" transform="rotate(-35 223.2 33.1)"/><ellipse cx="135.0" cy="214.9" rx="6.9" ry="4.1" fill="#ffffff" opacity="1"/></g></g><g filter="url(#b1)"><path d="M122.5 16.5 L128.2 19.3 L139.6 20.0 L144.2 27.6 L146.5 33.1 L151.1 40.0 L155.6 41.3 L157.9 37.2 L164.8 33.8 L176.2 29.6 L180.8 26.9 L183.1 22.0 L184.3 16.5 L192.3 11.7 L171.7 9.0 L154.5 10.3 L137.3 11.0Z M0.0 248.0 L0.0 231.5 L17.2 231.9 L25.2 230.1 L34.3 228.7 L51.5 226.6 L68.7 226.0 L85.8 225.3 L91.6 223.2 L103.0 224.6 L114.4 225.3 L120.2 221.8 L128.2 217.7 L133.9 212.9 L139.6 211.2 L139.6 213.6 L135.0 216.3 L136.2 220.4 L136.2 226.0 L131.6 230.1 L143.1 231.5 L157.9 231.5 L165.9 230.8 L174.0 228.7 L183.1 225.3 L192.3 222.5 L200.3 221.1 L211.7 220.4 L223.2 219.8 L234.6 220.4 L243.8 219.1 L249.5 219.8 L257.5 217.0 L265.5 214.9 L272.4 216.3 L278.1 217.0 L286.1 217.7 L288.4 219.8 L295.3 217.7 L303.3 215.6 L314.7 214.9 L322.7 214.2 L331.9 214.9 L343.3 215.9 L354.8 214.9 L366.2 215.6 L377.7 218.4 L389.1 220.4 L397.1 222.5 L400.6 224.6 L394.8 227.3 L393.7 231.5 L400.6 231.9 L412.0 231.5 L412.0 248.0Z" fill="#eceef4"/></g><g filter="url(#b2)"><path d="M62.9 26.9 L71.0 19.3 L85.8 15.2 L103.0 11.7 L120.2 9.6 L135.0 10.3 L123.6 16.5 L115.6 21.4 L124.7 26.2 L132.8 31.7 L130.5 37.2 L121.3 36.5 L114.4 32.4 L107.6 30.3 L97.3 28.9 L80.1 28.9Z" fill="#d3c9c0" opacity=".82"/><ellipse cx="97.3" cy="17.9" rx="29.8" ry="6.2" fill="#ece8e8" opacity="0.8"/><ellipse cx="91.6" cy="24.1" rx="25.2" ry="4.4" fill="#d6cdc4" opacity="0.8"/><ellipse cx="120.2" cy="27.6" rx="10.3" ry="6.9" fill="#e0d8d4" opacity="0.6"/><path d="M0.0 0.0 L412.0 0.0 L412.0 8.3 L0.0 8.3Z" fill="#dcdadf" opacity="0.95"/><path d="M0.0 248.0 L412.0 248.0 L412.0 234.2 L0.0 234.2Z" fill="#ecebf1"/></g><path d="M259.8 62.0 L264.4 59.9 L266.7 62.0 L263.2 62.7 L264.4 66.1 L267.8 68.2 L267.8 73.0 L263.2 73.0 L262.1 71.0 L263.2 68.2 L260.4 65.4Z" fill="#17455f" filter="url(#b1)"/><ellipse cx="107.6" cy="62.0" rx="4.0" ry="2.8" fill="#1f4d6d" opacity="0.8"/><path d="M34.3 0V248 M68.7 0V248 M103.0 0V248 M137.3 0V248 M171.7 0V248 M206.0 0V248 M240.3 0V248 M274.7 0V248 M309.0 0V248 M343.3 0V248 M377.7 0V248 M0 206.7H412 M0 165.3H412 M0 124.0H412 M0 82.7H412 M0 41.3H412" stroke="#080d12" stroke-width="0.85" fill="none" opacity="0.9"/><g fill="#e8141c"><circle cx="205.8" cy="52.8" r="1.95"/><circle cx="206.3" cy="53.2" r="1.95"/><circle cx="205.4" cy="52.6" r="1.95"/><circle cx="206.5" cy="52.6" r="1.95"/><circle cx="204.9" cy="52.9" r="1.95"/><circle cx="205.0" cy="52.4" r="1.95"/><circle cx="206.1" cy="53.6" r="1.95"/><circle cx="205.7" cy="52.1" r="1.95"/><circle cx="66.0" cy="58.6" r="1.95"/><circle cx="65.9" cy="72.1" r="1.95"/><circle cx="105.3" cy="66.1" r="1.95"/><circle cx="113.9" cy="63.9" r="1.95"/><circle cx="121.1" cy="67.9" r="1.95"/><circle cx="117.9" cy="70.3" r="1.95"/><circle cx="113.6" cy="75.1" r="1.95"/><circle cx="108.2" cy="78.8" r="1.95"/><circle cx="111.5" cy="85.7" r="1.95"/><circle cx="206.0" cy="53.0" r="1.95"/><circle cx="205.3" cy="53.5" r="1.95"/><circle cx="204.3" cy="51.8" r="1.95"/><circle cx="203.4" cy="50.4" r="1.95"/><circle cx="204.6" cy="49.7" r="1.95"/><circle cx="202.3" cy="47.1" r="1.95"/><circle cx="201.2" cy="47.0" r="1.95"/><circle cx="206.9" cy="52.4" r="1.95"/><circle cx="202.8" cy="53.2" r="1.95"/><circle cx="207.1" cy="53.5" r="1.95"/><circle cx="203.9" cy="54.0" r="1.95"/><circle cx="208.7" cy="56.6" r="1.95"/><circle cx="213.0" cy="60.2" r="1.95"/><circle cx="220.1" cy="61.2" r="1.95"/><circle cx="224.7" cy="57.6" r="1.95"/><circle cx="224.8" cy="64.1" r="1.95"/><circle cx="195.6" cy="70.8" r="1.95"/><circle cx="220.4" cy="71.8" r="1.95"/><circle cx="230.6" cy="71.2" r="1.95"/><circle cx="259.3" cy="90.0" r="1.95"/><circle cx="269.5" cy="89.0" r="1.95"/><circle cx="270.0" cy="88.3" r="1.95"/><circle cx="289.5" cy="97.5" r="1.95"/><circle cx="339.3" cy="72.6" r="1.95"/><circle cx="351.3" cy="72.5" r="1.95"/><circle cx="336.0" cy="92.3" r="1.95"/><circle cx="336.8" cy="93.0" r="1.95"/><circle cx="325.9" cy="108.0" r="1.95"/><circle cx="321.5" cy="119.6" r="1.95"/><circle cx="344.5" cy="103.6" r="1.95"/><circle cx="344.7" cy="101.1" r="1.95"/><circle cx="371.8" cy="176.2" r="1.95"/><circle cx="405.8" cy="174.4" r="1.95"/></g></g><rect x="0.4" y="0.4" width="411.2" height="247.2" fill="none" stroke="#555" stroke-width="0.8"/></svg></div><div class="a" style="left:205px;top:171.8px;width:20.8px;text-align:right;font-family:'Liberation Sans',sans-serif;font-size:6.3px;line-height:8px;color:#4a4a4a;white-space:nowrap">90</div><div class="a" style="left:228px;top:175.6px;width:4px;height:.8px;background:#555"></div><div class="a" style="left:205px;top:213.1px;width:20.8px;text-align:right;font-family:'Liberation Sans',sans-serif;font-size:6.3px;line-height:8px;color:#4a4a4a;white-space:nowrap">60</div><div class="a" style="left:228px;top:216.9px;width:4px;height:.8px;background:#555"></div><div class="a" style="left:205px;top:254.5px;width:20.8px;text-align:right;font-family:'Liberation Sans',sans-serif;font-size:6.3px;line-height:8px;color:#4a4a4a;white-space:nowrap">30</div><div class="a" style="left:228px;top:258.3px;width:4px;height:.8px;background:#555"></div><div class="a" style="left:205px;top:295.8px;width:20.8px;text-align:right;font-family:'Liberation Sans',sans-serif;font-size:6.3px;line-height:8px;color:#4a4a4a;white-space:nowrap">0</div><div class="a" style="left:228px;top:299.6px;width:4px;height:.8px;background:#555"></div><div class="a" style="left:205px;top:337.1px;width:20.8px;text-align:right;font-family:'Liberation Sans',sans-serif;font-size:6.3px;line-height:8px;color:#4a4a4a;white-space:nowrap">-30</div><div class="a" style="left:228px;top:340.9px;width:4px;height:.8px;background:#555"></div><div class="a" style="left:205px;top:378.5px;width:20.8px;text-align:right;font-family:'Liberation Sans',sans-serif;font-size:6.3px;line-height:8px;color:#4a4a4a;white-space:nowrap">-60</div><div class="a" style="left:228px;top:382.3px;width:4px;height:.8px;background:#555"></div><div class="a" style="left:205px;top:419.8px;width:20.8px;text-align:right;font-family:'Liberation Sans',sans-serif;font-size:6.3px;line-height:8px;color:#4a4a4a;white-space:nowrap">-90</div><div class="a" style="left:228px;top:423.6px;width:4px;height:.8px;background:#555"></div><div class="a" style="left:217.0px;top:427.4px;width:30px;text-align:center;font-family:'Liberation Sans',sans-serif;font-size:6.3px;line-height:8px;color:#4a4a4a;white-space:nowrap">-180</div><div class="a" style="left:231.6px;top:424px;width:.8px;height:3px;background:#555"></div><div class="a" style="left:251.3px;top:427.4px;width:30px;text-align:center;font-family:'Liberation Sans',sans-serif;font-size:6.3px;line-height:8px;color:#4a4a4a;white-space:nowrap">-150</div><div class="a" style="left:265.9px;top:424px;width:.8px;height:3px;background:#555"></div><div class="a" style="left:285.7px;top:427.4px;width:30px;text-align:center;font-family:'Liberation Sans',sans-serif;font-size:6.3px;line-height:8px;color:#4a4a4a;white-space:nowrap">-120</div><div class="a" style="left:300.3px;top:424px;width:.8px;height:3px;background:#555"></div><div class="a" style="left:320.0px;top:427.4px;width:30px;text-align:center;font-family:'Liberation Sans',sans-serif;font-size:6.3px;line-height:8px;color:#4a4a4a;white-space:nowrap">-90</div><div class="a" style="left:334.6px;top:424px;width:.8px;height:3px;background:#555"></div><div class="a" style="left:354.3px;top:427.4px;width:30px;text-align:center;font-family:'Liberation Sans',sans-serif;font-size:6.3px;line-height:8px;color:#4a4a4a;white-space:nowrap">-60</div><div class="a" style="left:368.9px;top:424px;width:.8px;height:3px;background:#555"></div><div class="a" style="left:388.7px;top:427.4px;width:30px;text-align:center;font-family:'Liberation Sans',sans-serif;font-size:6.3px;line-height:8px;color:#4a4a4a;white-space:nowrap">-30</div><div class="a" style="left:403.3px;top:424px;width:.8px;height:3px;background:#555"></div><div class="a" style="left:423.0px;top:427.4px;width:30px;text-align:center;font-family:'Liberation Sans',sans-serif;font-size:6.3px;line-height:8px;color:#4a4a4a;white-space:nowrap">0</div><div class="a" style="left:437.6px;top:424px;width:.8px;height:3px;background:#555"></div><div class="a" style="left:457.3px;top:427.4px;width:30px;text-align:center;font-family:'Liberation Sans',sans-serif;font-size:6.3px;line-height:8px;color:#4a4a4a;white-space:nowrap">30</div><div class="a" style="left:471.9px;top:424px;width:.8px;height:3px;background:#555"></div><div class="a" style="left:491.7px;top:427.4px;width:30px;text-align:center;font-family:'Liberation Sans',sans-serif;font-size:6.3px;line-height:8px;color:#4a4a4a;white-space:nowrap">60</div><div class="a" style="left:506.3px;top:424px;width:.8px;height:3px;background:#555"></div><div class="a" style="left:526.0px;top:427.4px;width:30px;text-align:center;font-family:'Liberation Sans',sans-serif;font-size:6.3px;line-height:8px;color:#4a4a4a;white-space:nowrap">90</div><div class="a" style="left:540.6px;top:424px;width:.8px;height:3px;background:#555"></div><div class="a" style="left:560.3px;top:427.4px;width:30px;text-align:center;font-family:'Liberation Sans',sans-serif;font-size:6.3px;line-height:8px;color:#4a4a4a;white-space:nowrap">120</div><div class="a" style="left:574.9px;top:424px;width:.8px;height:3px;background:#555"></div><div class="a" style="left:594.7px;top:427.4px;width:30px;text-align:center;font-family:'Liberation Sans',sans-serif;font-size:6.3px;line-height:8px;color:#4a4a4a;white-space:nowrap">150</div><div class="a" style="left:609.3px;top:424px;width:.8px;height:3px;background:#555"></div><div class="a" style="left:629.0px;top:427.4px;width:30px;text-align:center;font-family:'Liberation Sans',sans-serif;font-size:6.3px;line-height:8px;color:#4a4a4a;white-space:nowrap">180</div><div class="a" style="left:643.6px;top:424px;width:.8px;height:3px;background:#555"></div><div class="a v b" style="left:197.4px;top:453.7px;font-size:8.02px;line-height:12px;white-space:nowrap;text-decoration:underline;text-underline-offset:1px;color:#111">Geo Weather Data Sub Report</div><table class="r" style="left:198.5px;top:475px;width:456.0px"><colgroup><col style="width:49.5px"><col style="width:64.5px"><col style="width:44.5px"><col style="width:46.5px"><col style="width:26px"><col style="width:26px"><col style="width:52.60000000000002px"><col style="width:59.60000000000002px"><col style="width:36.799999999999955px"><col style="width:50px"></colgroup><tr style="height:25.2px"><th>Station<br>Name</th><th>Observation<br>Time</th><th>Country<br>Code</th><th>Elevation</th><th>lat</th><th>lng</th><th>Weather<br>Condition</th><th>temperature</th><th>Wind<br>Speed</th><th>Wind<br>Direction</th></tr><tr style="height:38.6px"><td class="n">London<br>City<br>Airport</td><td>2019-01-30<br>14:50:00</td><td>GB</td><td>5</td><td>51.5</td><td>0.05</td><td>n/a</td><td>5</td><td>7</td><td>300.0</td></tr></table><table class="r" style="left:198.5px;top:553px;width:507.0px"><colgroup><col style="width:51.400000000000006px"><col style="width:59.20000000000002px"><col style="width:40.39999999999998px"><col style="width:46.39999999999998px"><col style="width:26.0px"><col style="width:97.0px"><col style="width:47.0px"><col style="width:60.0px"><col style="width:33.39999999999998px"><col style="width:46.200000000000045px"></colgroup><tr style="height:26px"><th>Station<br>Name</th><th>Observation<br>Time</th><th>Country<br>Code</th><th>Elevation</th><th>lat</th><th>lng</th><th>Weather<br>Condition</th><th>temperature</th><th>Wind<br>Speed</th><th>Wind<br>Direction</th></tr><tr style="height:48px"><td class="n">Renton,<br>Renton<br>Municipal<br>Airport</td><td>2019-01-30<br>14:53:00</td><td>US</td><td>21</td><td>47.5</td><td>-<br>122.21666666666667</td><td>n/a</td><td>0</td><td>3</td><td>130.0</td></tr></table>
<div class="a sb" style="left:768.7px;top:83.5px;width:10.3px;height:551.4px;"></div>
<div class="a thumb" style="left:769.2px;top:97px;width:9.3px;height:425.8px;"></div>
<div class="a" style="left:771.7px;top:308px;width:5px;height:4.4px;background:repeating-linear-gradient(180deg,#8c8c8c 0,#8c8c8c .7px,transparent .7px,transparent 1.5px);opacity:.8"></div>
<div class="a" style="left:771.8px;top:89.2px;width:4.2px;height:2.6px;"><svg width="4.2" height="2.6" viewBox="0 0 5 3" style="display:block"><path d="M0 3L2.5 0L5 3z" fill="#505050"/></svg></div>
<div class="a" style="left:771.8px;top:628.2px;width:4.2px;height:2.6px;"><svg width="4.2" height="2.6" viewBox="0 0 5 3" style="display:block"><path d="M0 0L2.5 3L5 0z" fill="#505050"/></svg></div>
<div class="a" style="left:192.3px;top:641.5px;width:7.7px;height:7.7px;background:linear-gradient(135deg,#d8dbdf,#fafafa);border:1px solid #8e8f8f"></div>
<div class="a t" style="left:205px;top:640.80px;">Auto Refresh</div>
<div class="a" style="left:735px;top:640.8px;width:43px;height:10px;border:1px solid #8a8f96;border-radius:1.5px;background:linear-gradient(180deg,#f6f6f6 0,#ebebeb 48%,#dddddd 52%,#d2d2d2 100%);text-align:center"><div class="t" style="line-height:8.4px;text-align:center">Refresh</div></div>
<div class="a hd" style="left:790.2px;top:50.2px;width:202.4px;height:12.7px;">Report Properties</div><div class="a" style="left:981.5px;top:51.8px;width:10px;height:10px;"><svg width="10" height="10" viewBox="0 0 10 10" style="display:block;"><rect x=".8" y="4" width="6" height="5.2" fill="#f4f5f8" stroke="#d5d8de" stroke-width=".5"/><rect x="1.6" y="5" width="1.2" height="3.4" fill="#5a6aa8"/><rect x="3.4" y="5" width="1.2" height="3.4" fill="#8a96c8"/><path d="M4.4 3.4L6.4 1.2H9.4V3.2L7.6 4.6z" fill="#f0d44a" stroke="#9a8420" stroke-width=".45"/></svg></div><div class="a" style="left:792px;top:66.8px;width:13.6px;height:12.6px;border:1px solid #8793a8;border-radius:1.5px;background:linear-gradient(180deg,#dde2ea,#c9d0dc)"><svg width="11.6" height="10.6" viewBox="0 0 11.6 10.6" style="display:block;"><rect x="1.6" y="1.6" width="2.4" height="2.4" fill="#fff" stroke="#44506a" stroke-width=".5"/><rect x="1.6" y="6" width="2.4" height="2.4" fill="#fff" stroke="#44506a" stroke-width=".5"/><path d="M2.1 2.8H3.5M2.8 2.1V3.5M2.1 7.2H3.5" stroke="#222" stroke-width=".5"/><path d="M5.4 2.2H9.6M5.4 3.8H9.6M5.4 6.6H9.6M5.4 8.2H9.6" stroke="#6a7590" stroke-width=".6"/></svg></div><div class="a" style="left:807.5px;top:67.8px;width:11px;height:11px;"><svg width="11" height="11" viewBox="0 0 11 11" style="display:block;"><path d="M8.6 1.2V9M8.6 9.4L7 7.2M8.6 9.4L10.2 7.2" stroke="#222" stroke-width=".9" fill="none"/><path d="M1.4 5L3 1L4.6 5M2 3.8H4" stroke="#2a4fb8" stroke-width=".8" fill="none"/><path d="M1.6 6.2H4.4L1.6 9.8H4.6" stroke="#b8202a" stroke-width=".8" fill="none"/></svg></div><div class="a" style="left:822.6px;top:67.8px;width:1px;height:11px;background:#a0a0a0"></div><div class="a" style="left:826px;top:68.3px;width:10.6px;height:10px;"><svg width="10.6" height="10" viewBox="0 0 10.6 10" style="display:block;"><rect x=".6" y=".8" width="9.4" height="8.4" fill="#e9eaec" stroke="#b5b8bd" stroke-width=".6"/><rect x=".9" y="1.1" width="8.8" height="1.6" fill="#c9ccd1"/><path d="M2 4.4H8.6M2 6H8.6M2 7.6H8.6" stroke="#c4c7cc" stroke-width=".6"/></svg></div><div class="a pane" style="left:790.2px;top:81.2px;width:202.4px;height:212.6px;overflow:hidden"><div class="a" style="left:0px;top:0px;width:12px;height:213.9px;background:#f5f7fb"></div><div class="a" style="left:0px;top:0.4px;width:200.4px;height:10.15px;background:#eef2f8"></div><div class="a" style="left:5px;top:3.3px;width:5px;height:4.4px;"><svg width="5" height="4.4" viewBox="0 0 5 4.4" style="display:block;"><path d="M4.4 .4V4H.8z" fill="#444"/></svg></div><div class="a t b" style="left:15.6px;top:0.50px;font-size:7.6px;letter-spacing:0;color:#000">Data Source</div><div class="a" style="left:12px;top:20.22px;width:188.4px;height:0.6px;background:#f6f7fa"></div><div class="a t" style="left:15.5px;top:10.67px;color:#111">Data File</div><div class="a t b" style="left:94.29999999999995px;top:10.67px;font-size:7.4px;letter-spacing:0.1px;color:#000">GeoData.xml</div><div class="a" style="left:12px;top:30.38px;width:188.4px;height:0.6px;background:#f6f7fa"></div><div class="a t" style="left:15.5px;top:20.83px;color:#111">Data Type</div><div class="a t b" style="left:94.29999999999995px;top:20.83px;font-size:7.4px;letter-spacing:0.1px;color:#000">XML_Data_Set</div><div class="a" style="left:12px;top:40.54px;width:188.4px;height:0.6px;background:#f6f7fa"></div><div class="a t" style="left:15.5px;top:30.99px;color:#111">Encrypted</div><div class="a t b" style="left:94.29999999999995px;top:30.99px;font-size:7.4px;letter-spacing:0.1px;color:#000">False</div><div class="a" style="left:12px;top:50.71px;width:188.4px;height:0.6px;background:#f6f7fa"></div><div class="a" style="left:5.4px;top:43.56px;width:4px;height:5.2px;"><svg width="4" height="5.2" viewBox="0 0 4 5.2" style="display:block;"><path d="M.6 .6L3.4 2.6L.6 4.6z" fill="#fff" stroke="#9a9a9a" stroke-width=".6"/></svg></div><div class="a t" style="left:15.5px;top:41.16px;color:#111">Encryption</div><div class="a" style="left:12px;top:60.88px;width:188.4px;height:0.6px;background:#f6f7fa"></div><div class="a t" style="left:15.5px;top:51.33px;color:#111">Schema On</div><div class="a t b" style="left:94.29999999999995px;top:51.33px;font-size:7.4px;letter-spacing:0.1px;color:#000">True</div><div class="a" style="left:12px;top:71.04px;width:188.4px;height:0.6px;background:#f6f7fa"></div><div class="a t" style="left:15.5px;top:61.49px;color:#111">Schema File</div><div class="a" style="left:12px;top:81.21px;width:188.4px;height:0.6px;background:#f6f7fa"></div><div class="a t" style="left:15.5px;top:71.66px;color:#111">XSLT</div><div class="a" style="left:0px;top:81.72px;width:200.4px;height:10.15px;background:#eef2f8"></div><div class="a" style="left:5px;top:84.62px;width:5px;height:4.4px;"><svg width="5" height="4.4" viewBox="0 0 5 4.4" style="display:block;"><path d="M4.4 .4V4H.8z" fill="#444"/></svg></div><div class="a t b" style="left:15.6px;top:81.82px;font-size:7.6px;letter-spacing:0;color:#000">Report</div><div class="a" style="left:12px;top:101.54px;width:188.4px;height:0.6px;background:#f6f7fa"></div><div class="a t" style="left:15.5px;top:91.98px;color:#111">Name</div><div class="a t b" style="left:94.29999999999995px;top:91.98px;font-size:7.4px;letter-spacing:0.1px;color:#000">Geo Locations Report</div><div class="a" style="left:12px;top:111.7px;width:188.4px;height:0.6px;background:#f6f7fa"></div><div class="a t" style="left:15.5px;top:102.15px;color:#111">Title</div><div class="a t b" style="left:94.29999999999995px;top:102.15px;font-size:7.4px;letter-spacing:0.1px;color:#000">Geo Locations Report</div><div class="a" style="left:12px;top:121.86px;width:188.4px;height:0.6px;background:#f6f7fa"></div><div class="a t" style="left:15.5px;top:112.31px;color:#111">Description</div><div class="a" style="left:12px;top:132.03px;width:188.4px;height:0.6px;background:#f6f7fa"></div><div class="a t" style="left:15.5px;top:122.48px;color:#111">Keywords</div><div class="a" style="left:12px;top:142.19px;width:188.4px;height:0.6px;background:#f6f7fa"></div><div class="a t" style="left:15.5px;top:132.64px;color:#111">Version</div><div class="a" style="left:12px;top:152.36px;width:188.4px;height:0.6px;background:#f6f7fa"></div><div class="a t" style="left:15.5px;top:142.81px;color:#111">Author</div><div class="a" style="left:12px;top:162.53px;width:188.4px;height:0.6px;background:#f6f7fa"></div><div class="a t" style="left:15.5px;top:152.98px;color:#111">Copyright</div><div class="a" style="left:12px;top:172.69px;width:188.4px;height:0.6px;background:#f6f7fa"></div><div class="a t" style="left:15.5px;top:163.14px;color:#111">Date</div><div class="a" style="left:12px;top:182.85px;width:188.4px;height:0.6px;background:#f6f7fa"></div><div class="a t" style="left:15.5px;top:173.31px;color:#111">Notes</div><div class="a" style="left:12px;top:193.02px;width:188.4px;height:0.6px;background:#f6f7fa"></div><div class="a t" style="left:15.5px;top:183.47px;color:#111">TOC</div><div class="a" style="left:12px;top:203.18px;width:188.4px;height:0.6px;background:#f6f7fa"></div><div class="a t" style="left:15.5px;top:193.63px;color:#111">Cover Page</div><div class="a" style="left:12px;top:213.35px;width:188.4px;height:0.6px;background:#f6f7fa"></div><div class="a t" style="left:15.5px;top:203.80px;color:#9a9a9a">GUID</div><div class="a t" style="left:94.29999999999995px;top:203.80px;color:#9a9a9a">c43c1101-3c7f-483d-a618-8dd7</div><div class="a" style="left:90.79999999999995px;top:0px;width:0.6px;height:213.9px;background:#f1f3f8"></div><div class="a sb" style="left:190.20000000000002px;top:0px;width:10.2px;height:210.6px;"></div><div class="a thumb" style="left:190.70000000000002px;top:11.0px;width:9.2px;height:70.10000000000001px;"></div><div class="a" style="left:192.8px;top:43.849999999999994px;width:5px;height:4.4px;background:repeating-linear-gradient(180deg,#8c8c8c 0,#8c8c8c .7px,transparent .7px,transparent 1.5px);opacity:.8"></div><div class="a" style="left:192.8px;top:5.2px;width:5px;height:3px;"><svg width="4.2" height="2.6" viewBox="0 0 5 3" style="display:block;"><path d="M0 3L2.5 0L5 3z" fill="#505050"/></svg></div><div class="a" style="left:192.8px;top:203.2px;width:5px;height:3px;"><svg width="4.2" height="2.6" viewBox="0 0 5 3" style="display:block;"><path d="M0 0L2.5 3L5 0z" fill="#505050"/></svg></div></div><div class="a" style="left:790.2px;top:295.4px;width:202.4px;height:37.4px;background:#f0f0f0;border:1px solid #c1c2c4"></div><div class="a t b" style="left:794.6px;top:296.80px;font-size:7.4px;letter-spacing:-0.12px;color:#000">Name</div><div class="a t" style="left:794.6px;top:306.40px;">The Name of the Report.</div><div class="a hd" style="left:790.2px;top:337.5px;width:202.4px;height:12.5px;">Data Source</div><div class="a" style="left:981.5px;top:338.8px;width:10px;height:10px;"><svg width="10" height="10" viewBox="0 0 10 10" style="display:block;"><rect x=".8" y="4" width="6" height="5.2" fill="#f4f5f8" stroke="#d5d8de" stroke-width=".5"/><rect x="1.6" y="5" width="1.2" height="3.4" fill="#5a6aa8"/><rect x="3.4" y="5" width="1.2" height="3.4" fill="#8a96c8"/><path d="M4.4 3.4L6.4 1.2H9.4V3.2L7.6 4.6z" fill="#f0d44a" stroke="#9a8420" stroke-width=".45"/></svg></div><div class="a" style="left:792px;top:353.6px;width:13.6px;height:12.6px;border:1px solid #8793a8;border-radius:1.5px;background:linear-gradient(180deg,#dde2ea,#c9d0dc)"><svg width="11.6" height="10.6" viewBox="0 0 11.6 10.6" style="display:block;"><rect x="1.6" y="1.6" width="2.4" height="2.4" fill="#fff" stroke="#44506a" stroke-width=".5"/><rect x="1.6" y="6" width="2.4" height="2.4" fill="#fff" stroke="#44506a" stroke-width=".5"/><path d="M2.1 2.8H3.5M2.8 2.1V3.5M2.1 7.2H3.5" stroke="#222" stroke-width=".5"/><path d="M5.4 2.2H9.6M5.4 3.8H9.6M5.4 6.6H9.6M5.4 8.2H9.6" stroke="#6a7590" stroke-width=".6"/></svg></div><div class="a" style="left:807.5px;top:354.6px;width:11px;height:11px;"><svg width="11" height="11" viewBox="0 0 11 11" style="display:block;"><path d="M8.6 1.2V9M8.6 9.4L7 7.2M8.6 9.4L10.2 7.2" stroke="#222" stroke-width=".9" fill="none"/><path d="M1.4 5L3 1L4.6 5M2 3.8H4" stroke="#2a4fb8" stroke-width=".8" fill="none"/><path d="M1.6 6.2H4.4L1.6 9.8H4.6" stroke="#b8202a" stroke-width=".8" fill="none"/></svg></div><div class="a" style="left:822.6px;top:354.6px;width:1px;height:11px;background:#a0a0a0"></div><div class="a" style="left:826px;top:355.1px;width:10.6px;height:10px;"><svg width="10.6" height="10" viewBox="0 0 10.6 10" style="display:block;"><rect x=".6" y=".8" width="9.4" height="8.4" fill="#e9eaec" stroke="#b5b8bd" stroke-width=".6"/><rect x=".9" y="1.1" width="8.8" height="1.6" fill="#c9ccd1"/><path d="M2 4.4H8.6M2 6H8.6M2 7.6H8.6" stroke="#c4c7cc" stroke-width=".6"/></svg></div><div class="a pane" style="left:790.2px;top:368.6px;width:202.4px;height:248.6px;overflow:hidden"><div class="a" style="left:0px;top:0px;width:12px;height:112.1px;background:#f5f7fb"></div><div class="a" style="left:0px;top:0.1px;width:200.4px;height:10.15px;background:#eef2f8"></div><div class="a" style="left:5px;top:3.0px;width:5px;height:4.4px;"><svg width="5" height="4.4" viewBox="0 0 5 4.4" style="display:block;"><path d="M4.4 .4V4H.8z" fill="#444"/></svg></div><div class="a t b" style="left:15.6px;top:0.20px;font-size:7.6px;letter-spacing:0;color:#000">Data</div><div class="a" style="left:12px;top:19.93px;width:188.4px;height:0.6px;background:#f6f7fa"></div><div class="a t" style="left:15.5px;top:10.38px;color:#111">CaseSensitive</div><div class="a t" style="left:95.29999999999995px;top:10.38px;color:#111">False</div><div class="a" style="left:12px;top:30.11px;width:188.4px;height:0.6px;background:#f6f7fa"></div><div class="a t" style="left:15.5px;top:20.56px;color:#111">DataSetName</div><div class="a t b" style="left:95.29999999999995px;top:20.56px;font-size:7.4px;letter-spacing:0.1px;color:#000">Members</div><div class="a" style="left:12px;top:40.29px;width:188.4px;height:0.6px;background:#f6f7fa"></div><div class="a t" style="left:15.5px;top:30.74px;color:#111">Namespace</div><div class="a" style="left:12px;top:50.47px;width:188.4px;height:0.6px;background:#f6f7fa"></div><div class="a t" style="left:15.5px;top:40.92px;color:#111">Prefix</div><div class="a" style="left:12px;top:60.65px;width:188.4px;height:0.6px;background:#f6f7fa"></div><div class="a t" style="left:15.5px;top:51.10px;color:#111">Locale</div><div class="a t" style="left:95.29999999999995px;top:51.10px;color:#111">en-US</div><div class="a" style="left:12px;top:70.83px;width:188.4px;height:0.6px;background:#f6f7fa"></div><div class="a t" style="left:15.5px;top:61.28px;color:#111">Relations</div><div class="a t b" style="left:95.29999999999995px;top:61.28px;font-size:7.4px;letter-spacing:0.1px;color:#000">(Collection)</div><div class="a" style="left:12px;top:81.01px;width:188.4px;height:0.6px;background:#f6f7fa"></div><div class="a t" style="left:15.5px;top:71.46px;color:#111">Tables</div><div class="a t b" style="left:95.29999999999995px;top:71.46px;font-size:7.4px;letter-spacing:0.1px;color:#000">(Collection)</div><div class="a" style="left:0px;top:81.54px;width:200.4px;height:10.15px;background:#eef2f8"></div><div class="a" style="left:5px;top:84.44px;width:5px;height:4.4px;"><svg width="5" height="4.4" viewBox="0 0 5 4.4" style="display:block;"><path d="M4.4 .4V4H.8z" fill="#444"/></svg></div><div class="a t b" style="left:15.6px;top:81.64px;font-size:7.6px;letter-spacing:0;color:#000">Misc</div><div class="a" style="left:12px;top:101.37px;width:188.4px;height:0.6px;background:#f6f7fa"></div><div class="a t" style="left:15.5px;top:91.82px;color:#111">RemotingFormat</div><div class="a t" style="left:95.29999999999995px;top:91.82px;color:#111">Xml</div><div class="a" style="left:12px;top:111.55px;width:188.4px;height:0.6px;background:#f6f7fa"></div><div class="a t" style="left:15.5px;top:102.00px;color:#111">EnforceConstraints</div><div class="a t" style="left:95.29999999999995px;top:102.00px;color:#111">True</div><div class="a" style="left:91.79999999999995px;top:0px;width:0.6px;height:112.1px;background:#f1f3f8"></div></div><div class="a" style="left:790.2px;top:619px;width:202.4px;height:37.6px;background:#f0f0f0;border:1px solid #c1c2c4"></div><div class="a t b" style="left:794.6px;top:620.40px;font-size:7.4px;letter-spacing:-0.12px;color:#000">DataSetName</div><div class="a t" style="left:794.6px;top:630.20px;">The name of this DataSet.</div></div></body></html>
